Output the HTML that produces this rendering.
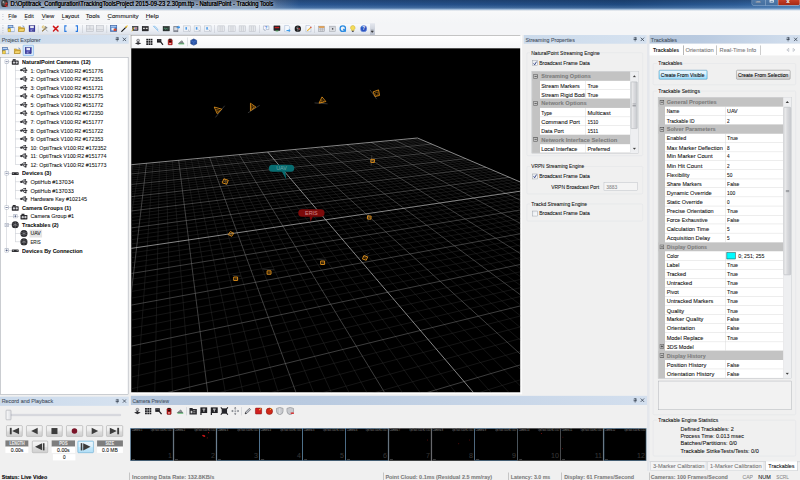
<!DOCTYPE html>
<html><head><meta charset="utf-8"><title>Tracking Tools</title>
<style>
html,body{margin:0;padding:0;width:800px;height:480px;overflow:hidden;background:#f0f0f0}
#root{position:absolute;left:0;top:0;width:1920px;height:1152px;transform:scale(0.416667);transform-origin:0 0;background:#f0f0f0;overflow:hidden;font-family:'Liberation Sans',sans-serif}
#root div,#root span.t,#root svg{position:absolute;box-sizing:border-box}
#root span.t{white-space:nowrap;-webkit-text-stroke:0.2px}

.hdr{background:linear-gradient(#cfdcec,#bccde2);}
.pg{background:#fff;border:1px solid #a0a0a0;}

</style></head><body><div id="root">
<div style="left:0.00px;top:0.00px;width:1920.00px;height:25.20px;background:linear-gradient(90deg,#3a506f 0%,#36527a 30%,#2a5690 37%,#255089 55%,#1f4a80 78%,#2c5c96 92%,#3d72ac 100%)"></div>
<div style="left:0.00px;top:0.00px;width:720.00px;height:25.20px;background:linear-gradient(90deg,rgba(184,198,216,.62) 0,rgba(184,198,216,.58) 82%,rgba(184,198,216,0) 100%)"></div>
<div style="left:0.00px;top:0.00px;width:1920.00px;height:25.20px;background:linear-gradient(180deg,rgba(10,20,40,.25),rgba(255,255,255,0) 45%,rgba(160,195,230,.22) 72%,rgba(170,198,228,.6) 86%,rgba(205,224,243,.95) 95%,#f2f6fb 100%)"></div>
<div style="left:3.36px;top:0.48px;width:15.36px;height:16.80px;background:radial-gradient(circle at 45% 45%,#6a6a6a 0,#2c2c2c 60%,#1a1a1a 100%);border-radius:35%"></div>
<div style="left:5.76px;top:2.88px;width:3.84px;height:3.84px;background:#b8b8b8;border-radius:50%"></div>
<div style="left:12.96px;top:6.24px;width:4.80px;height:4.80px;background:#d82828;border-radius:50%"></div>
<div style="left:10.56px;top:11.04px;width:4.32px;height:4.32px;background:#c82020;border-radius:50%"></div>
<div style="left:14.40px;top:12.96px;width:3.84px;height:3.84px;background:#e03030;border-radius:50%"></div>
<span class="t" style="left:24.96px;top:-0.84px;font:17px/20.40px 'Liberation Sans',sans-serif;color:#080808;transform:scaleX(0.8188);transform-origin:0 50%;text-shadow:0 0 0.7px #000,0 0 7px rgba(255,255,255,.6),0 0 12px rgba(255,255,255,.5),0 0 18px rgba(255,255,255,.4);">D:\Optitrack_Configuration\TrackingToolsProject 2015-09-23 2.30pm.ttp - NaturalPoint - Tracking Tools</span>
<div style="left:1803.60px;top:-9.60px;width:64.80px;height:22.32px;border:1px solid rgba(220,232,245,.6);border-radius:0 0 0 4px;background:linear-gradient(#5882b0,#456f9f)"></div>
<div style="left:1836.00px;top:-9.60px;width:1.01px;height:22.32px;background:rgba(230,240,250,.7)"></div>
<div style="left:1867.20px;top:-9.60px;width:52.80px;height:22.32px;border:1px solid rgba(240,220,215,.8);border-radius:0 0 4px 0;background:linear-gradient(#dc6a52,#c23c24 50%,#a42a16)"></div>
<div style="left:1814.40px;top:2.88px;width:11.04px;height:3.60px;background:#f4f6f8;border:1px solid #4a5a70"></div>
<div style="left:1846.80px;top:-1.44px;width:10.56px;height:7.68px;border:2px solid #f4f6f8;border-top-width:3px"></div>
<span class="t" style="left:1887.12px;top:-8.04px;font:bold 15px/18.00px 'Liberation Sans',sans-serif;color:#fff;text-shadow:0 0 2px #401008;">x</span>
<div style="left:0.00px;top:25.20px;width:1920.00px;height:30.48px;background:linear-gradient(#f8f9fa,#f4f5f7)"></div>
<div style="left:6.00px;top:30.00px;width:2.16px;height:20.40px;background:repeating-linear-gradient(#bcc2cc 0 2px,transparent 2px 4px)"></div>
<span class="t" style="left:20.40px;top:30.12px;font:15px/18.00px 'Liberation Sans',sans-serif;color:#111;transform:scaleX(0.8445);transform-origin:0 50%;">File</span>
<div style="left:20.64px;top:46.32px;width:6.24px;height:1.01px;background:#222"></div>
<span class="t" style="left:58.80px;top:30.12px;font:15px/18.00px 'Liberation Sans',sans-serif;color:#111;transform:scaleX(0.8451);transform-origin:0 50%;">Edit</span>
<div style="left:59.04px;top:46.32px;width:6.24px;height:1.01px;background:#222"></div>
<span class="t" style="left:99.84px;top:30.12px;font:15px/18.00px 'Liberation Sans',sans-serif;color:#111;transform:scaleX(0.9381);transform-origin:0 50%;">View</span>
<div style="left:100.08px;top:46.32px;width:6.24px;height:1.01px;background:#222"></div>
<span class="t" style="left:147.84px;top:30.12px;font:15px/18.00px 'Liberation Sans',sans-serif;color:#111;transform:scaleX(0.9270);transform-origin:0 50%;">Layout</span>
<div style="left:148.08px;top:46.32px;width:6.24px;height:1.01px;background:#222"></div>
<span class="t" style="left:206.40px;top:30.12px;font:15px/18.00px 'Liberation Sans',sans-serif;color:#111;transform:scaleX(0.9596);transform-origin:0 50%;">Tools</span>
<div style="left:206.64px;top:46.32px;width:6.24px;height:1.01px;background:#222"></div>
<span class="t" style="left:257.52px;top:30.12px;font:15px/18.00px 'Liberation Sans',sans-serif;color:#111;transform:scaleX(0.9839);transform-origin:0 50%;">Community</span>
<div style="left:257.76px;top:46.32px;width:6.24px;height:1.01px;background:#222"></div>
<span class="t" style="left:349.92px;top:30.12px;font:15px/18.00px 'Liberation Sans',sans-serif;color:#111;transform:scaleX(0.9960);transform-origin:0 50%;">Help</span>
<div style="left:350.16px;top:46.32px;width:6.24px;height:1.01px;background:#222"></div>
<div style="left:900.48px;top:55.20px;width:1019.52px;height:29.28px;background:#f4f5f7"></div>
<div style="left:0.00px;top:55.68px;width:900.00px;height:28.56px;background:linear-gradient(#fafbfd,#eef1f6 50%,#dde2ea);border-bottom:1px solid #b4bac6;border-radius:0 0 3px 0"></div>
<div style="left:6.00px;top:59.52px;width:2.16px;height:20.40px;background:repeating-linear-gradient(#bcc2cc 0 2px,transparent 2px 4px)"></div>
<svg style="left:17.65px;top:60.37px" width="17.5" height="17.5" viewBox="0 0 16 16"><rect x="1" y="1" width="11" height="10" fill="#5b8fd6" stroke="#2a4f8f"/><rect x="2" y="2" width="9" height="2" fill="#c8dcf5"/><rect x="5" y="6" width="10" height="9" fill="#e8f0fb" stroke="#4a6fa8"/><rect x="1" y="8" width="6" height="7" fill="#f0cf4a" stroke="#a8861a"/></svg>
<svg style="left:42.85px;top:60.37px" width="17.5" height="17.5" viewBox="0 0 16 16"><path d="M1 4h5l1 2h7v8H1z" fill="#e8b93a" stroke="#9a7414"/><path d="M3 8h12l-2 6H1z" fill="#f7d972" stroke="#9a7414"/><path d="M10 2q3 0 4 3" stroke="#2a5fb8" fill="none" stroke-width="1.3"/></svg>
<svg style="left:67.81px;top:60.37px" width="17.5" height="17.5" viewBox="0 0 16 16"><rect x="1.5" y="1.5" width="13" height="13" fill="#3a3aa8" stroke="#1a1a6a"/><rect x="4" y="2" width="8" height="5" fill="#e8e8f5"/><rect x="4.5" y="9.5" width="7" height="5" fill="#8a8ad0"/><rect x="9" y="10.5" width="2" height="3" fill="#22226a"/></svg>
<div style="left:90.72px;top:60.00px;width:1.01px;height:19.20px;background:#b8bcc4"></div>
<svg style="left:99.25px;top:60.37px" width="17.5" height="17.5" viewBox="0 0 16 16"><path d="M2 14L11 5" stroke="#8a6a2a" stroke-width="2.2"/><path d="M9 2l5 4-2 2-4-4z" fill="#7a8088"/><path d="M14 14L6 6" stroke="#9aa0a8" stroke-width="2"/><circle cx="4.5" cy="4.5" r="2.5" fill="none" stroke="#d8b040" stroke-width="1.6"/></svg>
<svg style="left:124.69px;top:60.37px" width="17.5" height="17.5" viewBox="0 0 16 16"><path d="M3 3l10 10M13 3L3 13" stroke="#d01818" stroke-width="3.2" stroke-linecap="round"/></svg>
<svg style="left:148.69px;top:60.37px" width="17.5" height="17.5" viewBox="0 0 16 16"><path d="M10 2H6v12h4" fill="none" stroke="#2a7ae0" stroke-width="2.4"/></svg>
<svg style="left:174.85px;top:60.37px" width="17.5" height="17.5" viewBox="0 0 16 16"><path d="M6 2h4v12H6" fill="none" stroke="#2a7ae0" stroke-width="2.4"/></svg>
<div style="left:198.12px;top:60.00px;width:1.01px;height:19.20px;background:#b8bcc4"></div>
<svg style="left:206.25px;top:59.37px" width="19.5" height="19.5" viewBox="0 0 16 16"><rect x="1" y="2" width="14" height="12" fill="#e4e6ea" stroke="#b4b8c0"/><path d="M8 2v7M1 9h14" stroke="#b4b8c0"/></svg>
<svg style="left:230.25px;top:59.37px" width="19.5" height="19.5" viewBox="0 0 16 16"><rect x="1" y="2" width="14" height="12" fill="#e4e6ea" stroke="#b4b8c0"/><path d="M1 10h14" stroke="#b4b8c0"/></svg>
<div style="left:256.32px;top:60.00px;width:1.01px;height:19.20px;background:#b8bcc4"></div>
<svg style="left:264.25px;top:60.37px" width="17.5" height="17.5" viewBox="0 0 16 16"><rect x="1" y="1" width="14" height="13" fill="#3f76c8" stroke="#24488a"/><rect x="2" y="2" width="12" height="3" fill="#9cc0f0"/><rect x="3" y="6" width="7" height="6" fill="#e8eef8"/><rect x="8" y="8" width="6" height="5" fill="#d84a2a"/></svg>
<svg style="left:289.81px;top:60.37px" width="17.5" height="17.5" viewBox="0 0 16 16"><path d="M2 14L12 4" stroke="#181818" stroke-width="2.6" stroke-linecap="round"/><path d="M11 5l3-3" stroke="#f0c030" stroke-width="2.6" stroke-linecap="round"/></svg>
<svg style="left:315.25px;top:60.37px" width="17.5" height="17.5" viewBox="0 0 16 16"><rect x="3" y="3" width="12" height="9" fill="#3a3a40" stroke="#18181c"/><rect x="6" y="5" width="7" height="5" fill="#b8c4e0"/><path d="M1 14L6 5" stroke="#e8b830" stroke-width="2"/><rect x="9" y="6" width="3" height="2" fill="#d83030"/></svg>
<svg style="left:339.85px;top:60.37px" width="17.5" height="17.5" viewBox="0 0 16 16"><rect x="1" y="3" width="14" height="10" fill="#2a2a2e" stroke="#0c0c10"/><rect x="3" y="6" width="4" height="3" fill="#d8d8d8"/><rect x="9" y="6" width="4" height="3" fill="#d8d8d8"/></svg>
<svg style="left:364.69px;top:60.37px" width="17.5" height="17.5" viewBox="0 0 16 16"><path d="M2 2L14 14M4 2q6 2 9 9" stroke="#6ab0e8" stroke-width="1.4" fill="none"/></svg>
<svg style="left:390.25px;top:60.37px" width="17.5" height="17.5" viewBox="0 0 16 16"><rect x="1" y="3" width="14" height="10" fill="#303a36" stroke="#101614"/><path d="M3 9l2-3 2 4 2-3 2 2 2-2" stroke="#6ad0a0" fill="none"/></svg>
<svg style="left:414.85px;top:60.37px" width="17.5" height="17.5" viewBox="0 0 16 16"><rect x="2" y="3" width="9" height="12" fill="#9a9ea8" stroke="#5a5e68"/><rect x="3" y="5" width="7" height="6" fill="#d8dce4"/><path d="M8 4h4V1l4 4-4 4V6H8z" fill="#2a8ae8"/></svg>
<svg style="left:439.05px;top:59.37px" width="19.5" height="19.5" viewBox="0 0 16 16"><rect x="1.5" y="2.5" width="13" height="11" fill="#eef1f6" stroke="#b8bec8"/><rect x="5" y="5" width="3" height="5" fill="#4a9ae8"/><path d="M10 10l3 3" stroke="#a0a6b0" stroke-width="1.5"/></svg>
<svg style="left:464.25px;top:59.37px" width="19.5" height="19.5" viewBox="0 0 16 16"><rect x="1.5" y="2.5" width="13" height="11" fill="#eef1f6" stroke="#b8bec8"/><rect x="5" y="5" width="3" height="5" fill="#4a9ae8"/><path d="M10 10l3 3" stroke="#a0a6b0" stroke-width="1.5"/></svg>
<svg style="left:489.21px;top:59.37px" width="19.5" height="19.5" viewBox="0 0 16 16"><rect x="1.5" y="2.5" width="13" height="11" fill="#eef1f6" stroke="#b8bec8"/><rect x="5" y="5" width="3" height="5" fill="#4a9ae8"/><path d="M10 10l3 3" stroke="#a0a6b0" stroke-width="1.5"/></svg>
<div style="left:514.08px;top:60.00px;width:1.01px;height:19.20px;background:#b8bcc4"></div>
<svg style="left:521.25px;top:59.37px" width="19.5" height="19.5" viewBox="0 0 16 16"><rect x="1.5" y="2.5" width="13" height="11" fill="#e6e8ec" stroke="#babec6"/><path d="M6 3v10M10 3v10" stroke="#babec6"/></svg>
<svg style="left:546.81px;top:59.37px" width="19.5" height="19.5" viewBox="0 0 16 16"><rect x="1.5" y="2.5" width="13" height="11" fill="#e6e8ec" stroke="#babec6"/><path d="M6 3v10M10 3v10" stroke="#babec6"/></svg>
<svg style="left:571.65px;top:59.37px" width="19.5" height="19.5" viewBox="0 0 16 16"><rect x="1.5" y="2.5" width="13" height="11" fill="#e6e8ec" stroke="#babec6"/><path d="M6 3v10M10 3v10" stroke="#babec6"/></svg>
<svg style="left:596.25px;top:59.37px" width="19.5" height="19.5" viewBox="0 0 16 16"><rect x="1.5" y="2.5" width="13" height="11" fill="#e6e8ec" stroke="#babec6"/><path d="M6 3v10M10 3v10" stroke="#babec6"/></svg>
<div style="left:622.08px;top:60.00px;width:1.01px;height:19.20px;background:#b8bcc4"></div>
<svg style="left:630.25px;top:60.37px" width="17.5" height="17.5" viewBox="0 0 16 16"><path d="M2 2h12v8H8l-3 3v-3H2z" fill="#f4f8ff" stroke="#8a94a8"/><text x="8" y="9" font-size="8" font-weight="bold" text-anchor="middle" fill="#2a6ad8" font-family="Liberation Sans,sans-serif">?</text></svg>
<svg style="left:655.81px;top:60.37px" width="17.5" height="17.5" viewBox="0 0 16 16"><rect x="1" y="2" width="14" height="10" fill="#26262a" stroke="#0a0a0c"/><rect x="3" y="4" width="10" height="3" fill="#c82020"/><rect x="5" y="12" width="6" height="2" fill="#3a9a4a"/></svg>
<svg style="left:680.77px;top:60.37px" width="17.5" height="17.5" viewBox="0 0 16 16"><path d="M2 1h8l3 3v11H2z" fill="#f4f8fd" stroke="#9ab0d0"/><path d="M6 11h5V8l4 4-4 4v-3H6z" fill="#3a9ae8"/></svg>
<svg style="left:706.21px;top:60.37px" width="17.5" height="17.5" viewBox="0 0 16 16"><circle cx="8" cy="8" r="7" fill="#1c1c1e"/><path d="M8 3v10M4 6l8 4" stroke="#d8d8d8" stroke-width="1"/><circle cx="11" cy="8" r="1.5" fill="#d82020"/></svg>
<svg style="left:731.65px;top:60.37px" width="17.5" height="17.5" viewBox="0 0 16 16"><path d="M2 1h8l3 3v11H2z" fill="#f6f8fc" stroke="#9aa8c0"/><path d="M5 13l8-8" stroke="#e8b030" stroke-width="2.4"/><path d="M12 6l2-2" stroke="#d83030" stroke-width="2.4"/></svg>
<div style="left:754.56px;top:60.00px;width:1.01px;height:19.20px;background:#b8bcc4"></div>
<svg style="left:762.85px;top:60.37px" width="17.5" height="17.5" viewBox="0 0 16 16"><rect x="1.5" y="2.5" width="13" height="12" fill="#d8dade" stroke="#8a8e96"/><rect x="2" y="3" width="12" height="3" fill="#e8902a"/><path d="M2 9h12M6 6v8M10 6v8" stroke="#a0a4ac"/></svg>
<svg style="left:789.25px;top:60.37px" width="17.5" height="17.5" viewBox="0 0 16 16"><rect x="1.5" y="2.5" width="13" height="12" fill="#dcdee2" stroke="#9a9ea6"/><rect x="2" y="3" width="12" height="2" fill="#b8bcc4"/><rect x="7" y="7" width="3" height="3" fill="#3a3a40"/></svg>
<svg style="left:813.85px;top:60.37px" width="17.5" height="17.5" viewBox="0 0 16 16"><circle cx="8" cy="8" r="6" fill="none" stroke="#2a8ae0" stroke-width="3"/><path d="M9 9l6 5" stroke="#2a8ae0" stroke-width="3"/></svg>
<svg style="left:838.21px;top:60.37px" width="17.5" height="17.5" viewBox="0 0 16 16"><path d="M8 1a5 5 0 0 1 3 9v2H5v-2a5 5 0 0 1 3-9z" fill="#f4dc5a" stroke="#c8a820"/><rect x="6" y="12.5" width="4" height="3" fill="#5a5a60"/></svg>
<svg style="left:863.65px;top:60.37px" width="17.5" height="17.5" viewBox="0 0 16 16"><circle cx="8" cy="8" r="7" fill="#2a52c0" stroke="#8aa8e8"/><text x="8" y="12" font-size="10" font-weight="bold" text-anchor="middle" fill="#fff" font-family="Liberation Sans,sans-serif">?</text></svg>
<div style="left:888.00px;top:55.68px;width:12.00px;height:28.56px;background:linear-gradient(#e4e7ee,#b9bfcc);border-radius:0 0 3px 0"></div>
<svg style="left:889.44px;top:70.80px;" width="8.64" height="8.64" viewBox="0 0 8.64 8.64"><path d="M1 1h6.6M1.5 4l2.8 3 2.8-3z" stroke="#222" stroke-width="1" fill="#222"/></svg>
<div style="left:0.00px;top:83.76px;width:309.12px;height:21.60px;background:linear-gradient(90deg,#cbdaeb,#d6e2f0)"></div>
<span class="t" style="left:3.84px;top:85.80px;font:15px/18.00px 'Liberation Sans',sans-serif;color:#46505e;transform:scaleX(0.8771);transform-origin:0 50%;">Project Explorer</span>
<svg style="left:275.52px;top:88.32px;" width="10.56" height="12.48" viewBox="0 0 10.56 12.48"><path d="M3 1.4h4.8v5.4H3zM1.4 7h8M5.4 7v4.6" stroke="#2a3646" stroke-width="1.2" fill="none"/><path d="M6.6 1.6v5.2" stroke="#2a3646" stroke-width="1.6"/></svg>
<svg style="left:292.80px;top:89.04px;" width="11.52" height="11.04" viewBox="0 0 11.52 11.04"><path d="M1.6 1.4l8.2 8.2M9.8 1.4L1.6 9.6" stroke="#2a3646" stroke-width="1.7"/></svg>
<svg style="left:5.17px;top:112.93px" width="17.5" height="17.5" viewBox="0 0 16 16"><rect x="1" y="1" width="11" height="10" fill="#5b8fd6" stroke="#2a4f8f"/><rect x="2" y="2" width="9" height="2" fill="#c8dcf5"/><rect x="5" y="6" width="10" height="9" fill="#e8f0fb" stroke="#4a6fa8"/><rect x="1" y="8" width="6" height="7" fill="#f0cf4a" stroke="#a8861a"/></svg>
<svg style="left:33.01px;top:112.93px" width="17.5" height="17.5" viewBox="0 0 16 16"><path d="M1 4h5l1 2h7v8H1z" fill="#e8b93a" stroke="#9a7414"/><path d="M3 8h12l-2 6H1z" fill="#f7d972" stroke="#9a7414"/><path d="M10 2q3 0 4 3" stroke="#2a5fb8" fill="none" stroke-width="1.3"/></svg>
<div style="left:55.20px;top:108.48px;width:25.44px;height:25.44px;background:#d6e8fb;border:1px solid #4a9ae8;border-radius:2px"></div>
<svg style="left:59.41px;top:112.93px" width="17.5" height="17.5" viewBox="0 0 16 16"><rect x="1.5" y="1.5" width="13" height="13" fill="#3a3aa8" stroke="#1a1a6a"/><rect x="4" y="2" width="8" height="5" fill="#e8e8f5"/><rect x="4.5" y="9.5" width="7" height="5" fill="#8a8ad0"/><rect x="9" y="10.5" width="2" height="3" fill="#22226a"/></svg>
<div style="left:0.96px;top:136.80px;width:306.72px;height:809.76px;background:#fff;border:1px solid #8a919c"></div>
<div style="left:15.12px;top:153.00px;width:1.01px;height:443.69px;background:#b4b9c2"></div>
<div style="left:36.48px;top:156.60px;width:1.01px;height:238.85px;background:#b4b9c2"></div>
<div style="left:36.48px;top:424.45px;width:1.01px;height:53.41px;background:#b4b9c2"></div>
<div style="left:36.48px;top:548.08px;width:1.01px;height:32.81px;background:#b4b9c2"></div>
<div style="left:20.40px;top:147.72px;width:7.20px;height:1.01px;background:#b4b9c2"></div>
<svg style="left:10.56px;top:143.16px" width="10" height="10" viewBox="0 0 9 9"><rect x="0.5" y="0.5" width="8" height="8" fill="#fff" stroke="#6a7890" stroke-width="1.1"/><path d="M2.2 4.5h4.6" stroke="#1a2a5a" stroke-width="1.2"/></svg>
<svg style="left:27.22px;top:138.70px" width="19" height="19" viewBox="0 0 16 16"><rect x="1" y="5" width="14" height="9" rx="1" fill="#2e2e32"/><rect x="3" y="2.5" width="6" height="3" fill="#2e2e32"/><circle cx="5.5" cy="9.5" r="2.3" fill="#d0d0d4"/><circle cx="11" cy="9.5" r="2.3" fill="#d0d0d4"/></svg>
<span class="t" style="left:52.56px;top:139.20px;font:bold 15px/18.00px 'Liberation Sans',sans-serif;color:#101010;transform:scaleX(0.8776);transform-origin:0 50%;">NaturalPoint Cameras (12)</span>
<div style="left:37.44px;top:168.32px;width:10.56px;height:1.01px;background:#b4b9c2"></div>
<svg style="left:48.10px;top:159.30px" width="19" height="19" viewBox="0 0 16 16"><path d="M1 8h12" stroke="#333338" stroke-width="2"/><path d="M11 5.2L15.8 8 11 10.8z" fill="#333338"/><path d="M3.6 8l2.8-3.8H10M5.6 8l2.8 3.8H11" stroke="#333338" stroke-width="1.7" fill="none"/><circle cx="2.6" cy="8" r="2.2" fill="#333338"/><rect x="9.2" y="2.6" width="3" height="3" fill="#333338"/><circle cx="11.6" cy="11.8" r="1.7" fill="#333338"/></svg>
<span class="t" style="left:72.96px;top:159.80px;font:15px/18.00px 'Liberation Sans',sans-serif;color:#141414;transform:scaleX(0.8482);transform-origin:0 50%;">1: OptiTrack V100:R2 #151776</span>
<div style="left:37.44px;top:188.93px;width:10.56px;height:1.01px;background:#b4b9c2"></div>
<svg style="left:48.10px;top:179.91px" width="19" height="19" viewBox="0 0 16 16"><path d="M1 8h12" stroke="#333338" stroke-width="2"/><path d="M11 5.2L15.8 8 11 10.8z" fill="#333338"/><path d="M3.6 8l2.8-3.8H10M5.6 8l2.8 3.8H11" stroke="#333338" stroke-width="1.7" fill="none"/><circle cx="2.6" cy="8" r="2.2" fill="#333338"/><rect x="9.2" y="2.6" width="3" height="3" fill="#333338"/><circle cx="11.6" cy="11.8" r="1.7" fill="#333338"/></svg>
<span class="t" style="left:72.96px;top:180.41px;font:15px/18.00px 'Liberation Sans',sans-serif;color:#141414;transform:scaleX(0.8482);transform-origin:0 50%;">2: OptiTrack V100:R2 #172351</span>
<div style="left:37.44px;top:209.53px;width:10.56px;height:1.01px;background:#b4b9c2"></div>
<svg style="left:48.10px;top:200.51px" width="19" height="19" viewBox="0 0 16 16"><path d="M1 8h12" stroke="#333338" stroke-width="2"/><path d="M11 5.2L15.8 8 11 10.8z" fill="#333338"/><path d="M3.6 8l2.8-3.8H10M5.6 8l2.8 3.8H11" stroke="#333338" stroke-width="1.7" fill="none"/><circle cx="2.6" cy="8" r="2.2" fill="#333338"/><rect x="9.2" y="2.6" width="3" height="3" fill="#333338"/><circle cx="11.6" cy="11.8" r="1.7" fill="#333338"/></svg>
<span class="t" style="left:72.96px;top:201.01px;font:15px/18.00px 'Liberation Sans',sans-serif;color:#141414;transform:scaleX(0.8482);transform-origin:0 50%;">3: OptiTrack V100:R2 #151721</span>
<div style="left:37.44px;top:230.14px;width:10.56px;height:1.01px;background:#b4b9c2"></div>
<svg style="left:48.10px;top:221.12px" width="19" height="19" viewBox="0 0 16 16"><path d="M1 8h12" stroke="#333338" stroke-width="2"/><path d="M11 5.2L15.8 8 11 10.8z" fill="#333338"/><path d="M3.6 8l2.8-3.8H10M5.6 8l2.8 3.8H11" stroke="#333338" stroke-width="1.7" fill="none"/><circle cx="2.6" cy="8" r="2.2" fill="#333338"/><rect x="9.2" y="2.6" width="3" height="3" fill="#333338"/><circle cx="11.6" cy="11.8" r="1.7" fill="#333338"/></svg>
<span class="t" style="left:72.96px;top:221.62px;font:15px/18.00px 'Liberation Sans',sans-serif;color:#141414;transform:scaleX(0.8482);transform-origin:0 50%;">4: OptiTrack V100:R2 #151775</span>
<div style="left:37.44px;top:250.74px;width:10.56px;height:1.01px;background:#b4b9c2"></div>
<svg style="left:48.10px;top:241.72px" width="19" height="19" viewBox="0 0 16 16"><path d="M1 8h12" stroke="#333338" stroke-width="2"/><path d="M11 5.2L15.8 8 11 10.8z" fill="#333338"/><path d="M3.6 8l2.8-3.8H10M5.6 8l2.8 3.8H11" stroke="#333338" stroke-width="1.7" fill="none"/><circle cx="2.6" cy="8" r="2.2" fill="#333338"/><rect x="9.2" y="2.6" width="3" height="3" fill="#333338"/><circle cx="11.6" cy="11.8" r="1.7" fill="#333338"/></svg>
<span class="t" style="left:72.96px;top:242.22px;font:15px/18.00px 'Liberation Sans',sans-serif;color:#141414;transform:scaleX(0.8482);transform-origin:0 50%;">5: OptiTrack V100:R2 #151772</span>
<div style="left:37.44px;top:271.34px;width:10.56px;height:1.01px;background:#b4b9c2"></div>
<svg style="left:48.10px;top:262.32px" width="19" height="19" viewBox="0 0 16 16"><path d="M1 8h12" stroke="#333338" stroke-width="2"/><path d="M11 5.2L15.8 8 11 10.8z" fill="#333338"/><path d="M3.6 8l2.8-3.8H10M5.6 8l2.8 3.8H11" stroke="#333338" stroke-width="1.7" fill="none"/><circle cx="2.6" cy="8" r="2.2" fill="#333338"/><rect x="9.2" y="2.6" width="3" height="3" fill="#333338"/><circle cx="11.6" cy="11.8" r="1.7" fill="#333338"/></svg>
<span class="t" style="left:72.96px;top:262.82px;font:15px/18.00px 'Liberation Sans',sans-serif;color:#141414;transform:scaleX(0.8482);transform-origin:0 50%;">6: OptiTrack V100:R2 #172350</span>
<div style="left:37.44px;top:291.95px;width:10.56px;height:1.01px;background:#b4b9c2"></div>
<svg style="left:48.10px;top:282.93px" width="19" height="19" viewBox="0 0 16 16"><path d="M1 8h12" stroke="#333338" stroke-width="2"/><path d="M11 5.2L15.8 8 11 10.8z" fill="#333338"/><path d="M3.6 8l2.8-3.8H10M5.6 8l2.8 3.8H11" stroke="#333338" stroke-width="1.7" fill="none"/><circle cx="2.6" cy="8" r="2.2" fill="#333338"/><rect x="9.2" y="2.6" width="3" height="3" fill="#333338"/><circle cx="11.6" cy="11.8" r="1.7" fill="#333338"/></svg>
<span class="t" style="left:72.96px;top:283.43px;font:15px/18.00px 'Liberation Sans',sans-serif;color:#141414;transform:scaleX(0.8482);transform-origin:0 50%;">7: OptiTrack V100:R2 #151777</span>
<div style="left:37.44px;top:312.55px;width:10.56px;height:1.01px;background:#b4b9c2"></div>
<svg style="left:48.10px;top:303.53px" width="19" height="19" viewBox="0 0 16 16"><path d="M1 8h12" stroke="#333338" stroke-width="2"/><path d="M11 5.2L15.8 8 11 10.8z" fill="#333338"/><path d="M3.6 8l2.8-3.8H10M5.6 8l2.8 3.8H11" stroke="#333338" stroke-width="1.7" fill="none"/><circle cx="2.6" cy="8" r="2.2" fill="#333338"/><rect x="9.2" y="2.6" width="3" height="3" fill="#333338"/><circle cx="11.6" cy="11.8" r="1.7" fill="#333338"/></svg>
<span class="t" style="left:72.96px;top:304.03px;font:15px/18.00px 'Liberation Sans',sans-serif;color:#141414;transform:scaleX(0.8482);transform-origin:0 50%;">8: OptiTrack V100:R2 #151722</span>
<div style="left:37.44px;top:333.16px;width:10.56px;height:1.01px;background:#b4b9c2"></div>
<svg style="left:48.10px;top:324.14px" width="19" height="19" viewBox="0 0 16 16"><path d="M1 8h12" stroke="#333338" stroke-width="2"/><path d="M11 5.2L15.8 8 11 10.8z" fill="#333338"/><path d="M3.6 8l2.8-3.8H10M5.6 8l2.8 3.8H11" stroke="#333338" stroke-width="1.7" fill="none"/><circle cx="2.6" cy="8" r="2.2" fill="#333338"/><rect x="9.2" y="2.6" width="3" height="3" fill="#333338"/><circle cx="11.6" cy="11.8" r="1.7" fill="#333338"/></svg>
<span class="t" style="left:72.96px;top:324.64px;font:15px/18.00px 'Liberation Sans',sans-serif;color:#141414;transform:scaleX(0.8482);transform-origin:0 50%;">9: OptiTrack V100:R2 #172353</span>
<div style="left:37.44px;top:353.76px;width:10.56px;height:1.01px;background:#b4b9c2"></div>
<svg style="left:48.10px;top:344.74px" width="19" height="19" viewBox="0 0 16 16"><path d="M1 8h12" stroke="#333338" stroke-width="2"/><path d="M11 5.2L15.8 8 11 10.8z" fill="#333338"/><path d="M3.6 8l2.8-3.8H10M5.6 8l2.8 3.8H11" stroke="#333338" stroke-width="1.7" fill="none"/><circle cx="2.6" cy="8" r="2.2" fill="#333338"/><rect x="9.2" y="2.6" width="3" height="3" fill="#333338"/><circle cx="11.6" cy="11.8" r="1.7" fill="#333338"/></svg>
<span class="t" style="left:72.96px;top:345.24px;font:15px/18.00px 'Liberation Sans',sans-serif;color:#141414;transform:scaleX(0.8499);transform-origin:0 50%;">10: OptiTrack V100:R2 #172352</span>
<div style="left:37.44px;top:374.36px;width:10.56px;height:1.01px;background:#b4b9c2"></div>
<svg style="left:48.10px;top:365.34px" width="19" height="19" viewBox="0 0 16 16"><path d="M1 8h12" stroke="#333338" stroke-width="2"/><path d="M11 5.2L15.8 8 11 10.8z" fill="#333338"/><path d="M3.6 8l2.8-3.8H10M5.6 8l2.8 3.8H11" stroke="#333338" stroke-width="1.7" fill="none"/><circle cx="2.6" cy="8" r="2.2" fill="#333338"/><rect x="9.2" y="2.6" width="3" height="3" fill="#333338"/><circle cx="11.6" cy="11.8" r="1.7" fill="#333338"/></svg>
<span class="t" style="left:72.96px;top:365.84px;font:15px/18.00px 'Liberation Sans',sans-serif;color:#141414;transform:scaleX(0.8543);transform-origin:0 50%;">11: OptiTrack V100:R2 #151774</span>
<div style="left:37.44px;top:394.97px;width:10.56px;height:1.01px;background:#b4b9c2"></div>
<svg style="left:48.10px;top:385.95px" width="19" height="19" viewBox="0 0 16 16"><path d="M1 8h12" stroke="#333338" stroke-width="2"/><path d="M11 5.2L15.8 8 11 10.8z" fill="#333338"/><path d="M3.6 8l2.8-3.8H10M5.6 8l2.8 3.8H11" stroke="#333338" stroke-width="1.7" fill="none"/><circle cx="2.6" cy="8" r="2.2" fill="#333338"/><rect x="9.2" y="2.6" width="3" height="3" fill="#333338"/><circle cx="11.6" cy="11.8" r="1.7" fill="#333338"/></svg>
<span class="t" style="left:72.96px;top:386.45px;font:15px/18.00px 'Liberation Sans',sans-serif;color:#141414;transform:scaleX(0.8499);transform-origin:0 50%;">12: OptiTrack V100:R2 #151773</span>
<div style="left:20.40px;top:415.57px;width:7.20px;height:1.01px;background:#b4b9c2"></div>
<svg style="left:10.56px;top:411.01px" width="10" height="10" viewBox="0 0 9 9"><rect x="0.5" y="0.5" width="8" height="8" fill="#fff" stroke="#6a7890" stroke-width="1.1"/><path d="M2.2 4.5h4.6" stroke="#1a2a5a" stroke-width="1.2"/></svg>
<svg style="left:27.22px;top:406.55px" width="19" height="19" viewBox="0 0 16 16"><rect x="1" y="5.5" width="14" height="5.5" rx="1.2" fill="#2e2e32"/><rect x="3" y="7" width="2" height="2" fill="#b0b0b4"/><rect x="11" y="7" width="2" height="2" fill="#b0b0b4"/></svg>
<span class="t" style="left:52.56px;top:407.05px;font:bold 15px/18.00px 'Liberation Sans',sans-serif;color:#101010;transform:scaleX(0.8845);transform-origin:0 50%;">Devices (3)</span>
<div style="left:37.44px;top:436.18px;width:10.56px;height:1.01px;background:#b4b9c2"></div>
<svg style="left:48.10px;top:427.16px" width="19" height="19" viewBox="0 0 16 16"><path d="M1 8h12" stroke="#333338" stroke-width="2"/><path d="M11 5.2L15.8 8 11 10.8z" fill="#333338"/><path d="M3.6 8l2.8-3.8H10M5.6 8l2.8 3.8H11" stroke="#333338" stroke-width="1.7" fill="none"/><circle cx="2.6" cy="8" r="2.2" fill="#333338"/><rect x="9.2" y="2.6" width="3" height="3" fill="#333338"/><circle cx="11.6" cy="11.8" r="1.7" fill="#333338"/></svg>
<span class="t" style="left:72.96px;top:427.66px;font:15px/18.00px 'Liberation Sans',sans-serif;color:#141414;transform:scaleX(0.8856);transform-origin:0 50%;">OptiHub #137034</span>
<div style="left:37.44px;top:456.78px;width:10.56px;height:1.01px;background:#b4b9c2"></div>
<svg style="left:48.10px;top:447.76px" width="19" height="19" viewBox="0 0 16 16"><path d="M1 8h12" stroke="#333338" stroke-width="2"/><path d="M11 5.2L15.8 8 11 10.8z" fill="#333338"/><path d="M3.6 8l2.8-3.8H10M5.6 8l2.8 3.8H11" stroke="#333338" stroke-width="1.7" fill="none"/><circle cx="2.6" cy="8" r="2.2" fill="#333338"/><rect x="9.2" y="2.6" width="3" height="3" fill="#333338"/><circle cx="11.6" cy="11.8" r="1.7" fill="#333338"/></svg>
<span class="t" style="left:72.96px;top:448.26px;font:15px/18.00px 'Liberation Sans',sans-serif;color:#141414;transform:scaleX(0.8856);transform-origin:0 50%;">OptiHub #137033</span>
<div style="left:37.44px;top:477.38px;width:10.56px;height:1.01px;background:#b4b9c2"></div>
<svg style="left:48.10px;top:468.36px" width="19" height="19" viewBox="0 0 16 16"><path d="M1 8h12" stroke="#333338" stroke-width="2"/><path d="M11 5.2L15.8 8 11 10.8z" fill="#333338"/><path d="M3.6 8l2.8-3.8H10M5.6 8l2.8 3.8H11" stroke="#333338" stroke-width="1.7" fill="none"/><circle cx="2.6" cy="8" r="2.2" fill="#333338"/><rect x="9.2" y="2.6" width="3" height="3" fill="#333338"/><circle cx="11.6" cy="11.8" r="1.7" fill="#333338"/></svg>
<span class="t" style="left:72.96px;top:468.86px;font:15px/18.00px 'Liberation Sans',sans-serif;color:#141414;transform:scaleX(0.8603);transform-origin:0 50%;">Hardware Key #102145</span>
<div style="left:20.40px;top:497.99px;width:7.20px;height:1.01px;background:#b4b9c2"></div>
<svg style="left:10.56px;top:493.43px" width="10" height="10" viewBox="0 0 9 9"><rect x="0.5" y="0.5" width="8" height="8" fill="#fff" stroke="#6a7890" stroke-width="1.1"/><path d="M2.2 4.5h4.6" stroke="#1a2a5a" stroke-width="1.2"/></svg>
<svg style="left:27.22px;top:488.97px" width="19" height="19" viewBox="0 0 16 16"><rect x="1" y="5" width="14" height="9" rx="1" fill="#2e2e32"/><rect x="3" y="2.5" width="6" height="3" fill="#2e2e32"/><circle cx="5.5" cy="9.5" r="2.3" fill="#d0d0d4"/><circle cx="11" cy="9.5" r="2.3" fill="#d0d0d4"/></svg>
<span class="t" style="left:52.56px;top:489.47px;font:bold 15px/18.00px 'Liberation Sans',sans-serif;color:#101010;transform:scaleX(0.8707);transform-origin:0 50%;">Camera Groups (1)</span>
<div style="left:20.40px;top:518.59px;width:25.20px;height:1.01px;background:#b4b9c2"></div>
<svg style="left:31.92px;top:514.03px" width="10" height="10" viewBox="0 0 9 9"><rect x="0.5" y="0.5" width="8" height="8" fill="#fff" stroke="#6a7890" stroke-width="1.1"/><path d="M2.2 4.5h4.6" stroke="#1a2a5a" stroke-width="1.2"/><path d="M4.5 2.2v4.6" stroke="#1a2a5a" stroke-width="1.2"/></svg>
<svg style="left:48.10px;top:509.57px" width="19" height="19" viewBox="0 0 16 16"><rect x="1" y="5" width="14" height="9" rx="1" fill="#2e2e32"/><rect x="3" y="2.5" width="6" height="3" fill="#2e2e32"/><circle cx="5.5" cy="9.5" r="2.3" fill="#d0d0d4"/><circle cx="11" cy="9.5" r="2.3" fill="#d0d0d4"/></svg>
<span class="t" style="left:72.96px;top:510.07px;font:15px/18.00px 'Liberation Sans',sans-serif;color:#141414;transform:scaleX(0.8713);transform-origin:0 50%;">Camera Group #1</span>
<div style="left:20.40px;top:539.20px;width:7.20px;height:1.01px;background:#b4b9c2"></div>
<svg style="left:10.56px;top:534.64px" width="10" height="10" viewBox="0 0 9 9"><rect x="0.5" y="0.5" width="8" height="8" fill="#fff" stroke="#6a7890" stroke-width="1.1"/><path d="M2.2 4.5h4.6" stroke="#1a2a5a" stroke-width="1.2"/></svg>
<svg style="left:27.22px;top:530.18px" width="19" height="19" viewBox="0 0 16 16"><circle cx="8" cy="8" r="7.2" fill="#28282c"/><path d="M8 2v12M2.5 5.5l11 5M13.5 5.5l-11 5" stroke="#a8a8ac" stroke-width="0.9"/></svg>
<span class="t" style="left:52.56px;top:530.68px;font:bold 15px/18.00px 'Liberation Sans',sans-serif;color:#101010;transform:scaleX(0.8777);transform-origin:0 50%;">Trackables (2)</span>
<div style="left:37.44px;top:559.80px;width:10.56px;height:1.01px;background:#b4b9c2"></div>
<svg style="left:48.10px;top:550.78px" width="19" height="19" viewBox="0 0 16 16"><circle cx="8" cy="8" r="7.2" fill="#28282c"/><path d="M8 2v12M2.5 5.5l11 5M13.5 5.5l-11 5" stroke="#a8a8ac" stroke-width="0.9"/></svg>
<div style="left:70.56px;top:550.68px;width:30.24px;height:19.20px;background:#e4e4e4"></div>
<span class="t" style="left:72.96px;top:551.28px;font:15px/18.00px 'Liberation Sans',sans-serif;color:#141414;transform:scaleX(0.8318);transform-origin:0 50%;">UAV</span>
<div style="left:37.44px;top:580.40px;width:10.56px;height:1.01px;background:#b4b9c2"></div>
<svg style="left:48.10px;top:571.38px" width="19" height="19" viewBox="0 0 16 16"><circle cx="8" cy="8" r="7.2" fill="#28282c"/><path d="M8 2v12M2.5 5.5l11 5M13.5 5.5l-11 5" stroke="#a8a8ac" stroke-width="0.9"/></svg>
<span class="t" style="left:72.96px;top:571.88px;font:15px/18.00px 'Liberation Sans',sans-serif;color:#141414;transform:scaleX(0.7063);transform-origin:0 50%;">ERIS</span>
<div style="left:20.40px;top:601.01px;width:7.20px;height:1.01px;background:#b4b9c2"></div>
<svg style="left:10.56px;top:596.45px" width="10" height="10" viewBox="0 0 9 9"><rect x="0.5" y="0.5" width="8" height="8" fill="#fff" stroke="#6a7890" stroke-width="1.1"/><path d="M2.2 4.5h4.6" stroke="#1a2a5a" stroke-width="1.2"/><path d="M4.5 2.2v4.6" stroke="#1a2a5a" stroke-width="1.2"/></svg>
<svg style="left:27.22px;top:591.99px" width="19" height="19" viewBox="0 0 16 16"><rect x="1" y="5.5" width="14" height="5.5" rx="1.2" fill="#2e2e32"/><rect x="3" y="7" width="2" height="2" fill="#b0b0b4"/><rect x="11" y="7" width="2" height="2" fill="#b0b0b4"/></svg>
<span class="t" style="left:52.56px;top:592.49px;font:bold 15px/18.00px 'Liberation Sans',sans-serif;color:#101010;transform:scaleX(0.8710);transform-origin:0 50%;">Devices By Connection</span>
<div style="left:313.68px;top:84.48px;width:935.52px;height:31.92px;background:linear-gradient(#ffffff,#f4f5f7);border-top:1.4px solid #7c7c7c;border-left:1.4px solid #707070"></div>
<svg style="left:322.70px;top:92.06px" width="17" height="17" viewBox="0 0 16 16"><circle cx="8" cy="5" r="3.2" fill="#c8c8cc" stroke="#4a4a50" stroke-width="1.2"/><rect x="6.6" y="7" width="2.8" height="3" fill="#3a3a3e"/><path d="M0.8 11.2L8 8.6l7.2 2.6L8 14.6z" fill="#2e2e32"/></svg>
<svg style="left:349.82px;top:92.06px" width="17" height="17" viewBox="0 0 16 16"><path d="M1 1h4v4H1zM6 1h4v4H6zM11 1h4v4h-4zM1 6h4v4H1zM6 6h4v4H6zM11 6h4v4h-4zM1 11h4v4H1zM6 11h4v4H6zM11 11h4v4h-4z" fill="#1e1e22"/></svg>
<svg style="left:375.50px;top:92.06px" width="17" height="17" viewBox="0 0 16 16"><rect x="0.6" y="1.6" width="10" height="8" fill="#1e1e22"/><rect x="2" y="3" width="7.2" height="2" fill="#55555a"/><path d="M9.4 8.6l5 6" stroke="#1e1e22" stroke-width="2.8"/></svg>
<svg style="left:400.22px;top:92.06px" width="17" height="17" viewBox="0 0 16 16"><rect x="3.4" y="2.4" width="9.2" height="12.8" rx="1.6" fill="#c41616" stroke="#5a0c0c" stroke-width="1"/><rect x="5" y="0.6" width="6" height="3" fill="#3a1414"/><rect x="5.2" y="5" width="5.6" height="3.6" fill="#2c0c0c"/><rect x="5.6" y="10.6" width="4.8" height="2.6" fill="#f0b0b0"/></svg>
<svg style="left:425.90px;top:92.06px" width="17" height="17" viewBox="0 0 16 16"><path d="M0.6 12L10 4.4l5.4 7.6z" fill="#6e7276"/><path d="M4 9.6l5.4-4 3.4 4z" fill="#8e9296"/><path d="M2.6 12.6h13" stroke="#30a844" stroke-width="1.7"/></svg>
<div style="left:449.52px;top:90.00px;width:1.01px;height:20.88px;background:#b8bcc4"></div>
<svg style="left:456.12px;top:91.56px" width="18" height="18" viewBox="0 0 16 16"><path d="M8 1l6.5 3.5v7L8 15l-6.5-3.5v-7z" fill="#2a55a8" stroke="#16306a"/><path d="M8 8v7M8 8L1.5 4.5M8 8l6.5-3.5" stroke="#5a88d8" stroke-width="1"/></svg>
<svg style="left:314.88px;top:116.16px;background:#000" width="933.84" height="826.08" viewBox="0 0 933.84 826.08"><path d="M-4838.8 3823.8L-385.6 315.2M1112.3 3787.9L2898.6 1161.9M-4652.8 3822.7L-366.1 313.4M552.7 3791.3L2767.2 1105.7M-4466.9 3821.5L-346.8 311.6M-6.9 3794.7L2647.6 1054.5M-4280.9 3820.4L-327.6 309.8M-566.4 3798.0L2538.1 1007.6M-3909.0 3818.2L-289.9 306.3M-1685.6 3804.8L2344.8 924.9M-3723.0 3817.1L-271.3 304.6M-2245.2 3808.1L2259.2 888.2M-3537.0 3815.9L-252.9 302.8M-2804.7 3811.5L2179.7 854.2M-3351.1 3814.8L-234.6 301.1M-3364.3 3814.9L2105.8 822.6M-2979.1 3812.6L-198.6 297.8M-4483.5 3821.6L1972.6 765.5M-2793.2 3811.5L-180.8 296.1M-4999.5 3805.7L1912.4 739.8M-2607.2 3810.3L-163.2 294.5M-4329.8 3297.2L1855.8 715.5M-2421.2 3809.2L-145.7 292.8M-3816.3 2907.2L1802.6 692.8M-2049.3 3807.0L-111.3 289.6M-3080.6 2348.6L1705.3 651.1M-1863.3 3805.8L-94.3 288.0M-2808.0 2141.6L1660.6 632.0M-1677.4 3804.7L-77.4 286.5M-2578.9 1967.6L1618.3 613.9M-1491.4 3803.6L-60.7 284.9M-2383.4 1819.2L1578.2 596.7M-1119.5 3801.4L-27.7 281.8M-2067.9 1579.6L1503.9 564.9M-933.5 3800.2L-11.5 280.3M-1938.6 1481.4L1469.5 550.2M-747.5 3799.1L4.6 278.8M-1824.1 1394.5L1436.6 536.1M-561.6 3798.0L20.6 277.3M-1721.9 1316.9L1405.3 522.7M-189.6 3795.8L52.2 274.4M-1547.3 1184.3L1346.8 497.6M-3.7 3794.6L67.8 272.9M-1472.2 1127.2L1319.5 485.9M182.3 3793.5L83.3 271.5M-1403.7 1075.2L1293.2 474.7M368.3 3792.4L98.6 270.1M-1341.0 1027.6L1268.1 464.0M740.2 3790.1L128.8 267.2M-1230.3 943.6L1220.8 443.7M926.2 3789.0L143.8 265.8M-1181.2 906.3L1198.6 434.2M1112.1 3787.9L158.6 264.5M-1135.7 871.7L1177.2 425.0M1298.1 3786.8L173.3 263.1M-1093.4 839.5L1156.5 416.2M1670.0 3784.5L202.4 260.4M-1017.0 781.6L1117.5 399.5M1770.7 3600.0L216.7 259.0M-982.4 755.3L1099.1 391.6M1861.3 3430.8L230.9 257.7M-950.0 730.7L1081.3 384.0M1944.0 3276.5L245.0 256.4M-919.5 707.5L1064.0 376.6M2089.2 3005.4L272.9 253.8M-863.6 665.1L1031.3 362.6M2153.4 2885.6L286.7 252.5M-838.0 645.6L1015.8 355.9M2212.7 2774.9L300.4 251.2M-813.7 627.2L1000.7 349.5M2267.7 2672.1L313.9 250.0M-790.7 609.7L986.1 343.2M2366.6 2487.4L340.7 247.5M-748.0 577.3L958.3 331.3M2411.3 2404.1L354.0 246.2M-728.3 562.3L945.0 325.6M2453.1 2326.0L367.1 245.0M-709.4 548.0L932.1 320.1M2492.4 2252.7L380.2 243.8M-691.4 534.3L919.6 314.7M2564.1 2118.8L405.9 241.4M-657.8 508.8L895.6 304.5M2596.9 2057.5L418.7 240.2M-642.1 496.9L884.1 299.6M2628.0 1999.5L431.3 239.0M-627.0 485.5L872.9 294.8M2657.4 1944.6L443.9 237.9M-612.6 474.5L862.1 290.1M2711.8 1843.1L468.7 235.5M-585.4 453.9L841.2 281.2M2736.9 1796.1L481.0 234.4M-572.7 444.2L831.2 276.9M2760.9 1751.4L493.1 233.3M-560.3 434.8L821.4 272.7M2783.8 1708.7L505.2 232.1M-548.5 425.8L811.9 268.6M2826.4 1629.1L529.1 229.9M-526.1 408.8L793.6 260.8M2846.3 1591.9L540.9 228.8M-515.5 400.7L784.7 257.0M2865.4 1556.4L552.7 227.7M-505.2 393.0L776.1 253.3M2883.6 1522.3L564.3 226.6M-495.3 385.4L767.7 249.7M2917.9 1458.2L587.3 224.5M-476.5 371.2L751.5 242.8M2934.1 1428.1L598.7 223.4M-467.6 364.4L743.7 239.4M2949.6 1399.1L610.1 222.4M-458.9 357.8L736.0 236.2M2964.5 1371.2L621.3 221.3M-450.5 351.4L728.5 233.0M2992.7 1318.5L643.5 219.2M-434.5 339.3L714.1 226.8M3006.1 1293.6L654.5 218.2M-426.9 333.5L707.1 223.8M3019.0 1269.6L665.4 217.2M-419.5 327.8L700.3 220.9M3031.4 1246.4L676.2 216.2M-412.3 322.4L693.6 218.0" stroke="#323232" stroke-width="1" fill="none"/><path d="M-5024.8 3824.9L-405.3 317.1M1671.9 3784.5L3043.4 1223.9M-4094.9 3819.3L-308.7 308.0M-1126.0 3801.4L2437.5 964.6M-3165.1 3813.7L-216.5 299.4M-3923.9 3818.3L2037.0 793.1M-2235.3 3808.1L-128.4 291.2M-3410.0 2598.7L1752.5 671.3M-1305.4 3802.5L-44.2 283.4M-2214.8 1691.1L1540.1 580.4M-375.6 3796.9L36.5 275.9M-1630.2 1247.2L1375.4 509.9M554.2 3791.3L113.8 268.6M-1283.4 983.9L1244.0 453.6M1484.1 3785.7L187.9 261.7M-1053.9 809.6L1136.7 407.7M2019.7 3135.2L259.0 255.1M-890.7 685.7L1047.4 369.5M2529.3 2183.8L393.1 242.6M-674.2 521.3L907.4 309.5M2685.3 1892.6L456.3 236.7M-598.8 464.0L851.5 285.6M2805.6 1668.0L517.2 231.0M-537.1 417.1L802.6 264.7M2901.1 1489.6L575.9 225.5M-485.8 378.2L759.5 246.2M2978.9 1344.4L632.4 220.3M-442.4 345.3L721.2 229.8" stroke="#767676" stroke-width="1.25" fill="none"/><path d="M2318.9 2576.6L327.4 248.7M-768.8 593.1L972.0 337.2M3043.4 1223.9L687.0 215.2M-405.3 317.1L687.0 215.2" stroke="#bcbcbc" stroke-width="1.7" fill="none"/><path d="M202.1 165.8L224.2 137.8" stroke="#5a5a5a" stroke-width="1.4"/><path d="M199.2 140.9L217.2 145.9L206.2 156.8Z" stroke="#e8951a" stroke-width="2" fill="none" stroke-linejoin="round"/><path d="M204.7 146.4L212.2 148.6L207.4 153.1Z" stroke="#e8951a" stroke-width="1.2" fill="none" stroke-linejoin="round"/><path d="M280.1 154.8L308.2 136.8" stroke="#5a5a5a" stroke-width="1.4"/><path d="M286.1 131.8L299.0 140.9L286.1 149.8Z" stroke="#e8951a" stroke-width="2" fill="none" stroke-linejoin="round"/><path d="M289.0 137.3L294.7 141.1L289.0 145.4Z" stroke="#e8951a" stroke-width="1.2" fill="none" stroke-linejoin="round"/><path d="M439.9 131.0L471.1 133.2" stroke="#5a5a5a" stroke-width="1.4"/><path d="M457.9 116.6L467.0 127.7L450.7 131.5Z" stroke="#e8951a" stroke-width="2" fill="none" stroke-linejoin="round"/><path d="M457.9 122.9L462.7 128.2L454.6 129.8Z" stroke="#e8951a" stroke-width="1.2" fill="none" stroke-linejoin="round"/><path d="M573.1 99.8L589.0 121.9" stroke="#5a5a5a" stroke-width="1.4"/><path d="M580.3 104.6L593.5 99.8L595.9 113.0L585.1 115.7Z" stroke="#e8951a" stroke-width="2" fill="none" stroke-linejoin="round"/><path d="M584.2 107.0L591.4 104.6L592.8 111.4L586.6 113.0Z" stroke="#e8951a" stroke-width="1.1" fill="none" stroke-linejoin="round"/><path d="M223.2 312.5L228.5 326.9" stroke="#5a5a5a" stroke-width="1.1"/><path d="M229.0 326.1L218.3 322.7L222.2 313.2L232.9 316.7Z" stroke="#e8951a" stroke-width="2.2" fill="none" stroke-linejoin="round"/><path d="M227.5 321.5L223.8 320.3L225.1 316.9L228.9 318.1Z" stroke="#b87818" stroke-width="1.0" fill="none" stroke-linejoin="round"/><path d="M575.8 282.2L577.4 255.8" stroke="#5a5a5a" stroke-width="1.1"/><path d="M583.2 274.3L574.8 273.6L575.5 266.2L584.0 266.8Z" stroke="#e8951a" stroke-width="2.2" fill="none" stroke-linejoin="round"/><path d="M581.4 271.2L578.5 270.9L578.7 268.3L581.7 268.6Z" stroke="#b87818" stroke-width="1.0" fill="none" stroke-linejoin="round"/><path d="M568.3 415.7L570.0 396.5" stroke="#5a5a5a" stroke-width="1.1"/><path d="M575.1 410.1L566.6 409.5L567.3 402.0L575.8 402.7Z" stroke="#e8951a" stroke-width="2.2" fill="none" stroke-linejoin="round"/><path d="M573.3 407.0L570.3 406.8L570.6 404.2L573.5 404.4Z" stroke="#b87818" stroke-width="1.0" fill="none" stroke-linejoin="round"/><path d="M232.3 449.0L246.7 441.8" stroke="#5a5a5a" stroke-width="1.1"/><path d="M241.2 451.1L233.1 446.9L237.8 439.8L245.9 443.9Z" stroke="#e8951a" stroke-width="2.2" fill="none" stroke-linejoin="round"/><path d="M240.8 446.9L238.0 445.5L239.6 443.0L242.5 444.4Z" stroke="#b87818" stroke-width="1.0" fill="none" stroke-linejoin="round"/><path d="M445.0 505.9L467.8 508.3" stroke="#5a5a5a" stroke-width="1.1"/><path d="M464.0 518.7L454.7 518.7L454.7 510.5L464.0 510.5Z" stroke="#e8951a" stroke-width="2.2" fill="none" stroke-linejoin="round"/><path d="M461.7 515.5L458.4 515.5L458.4 512.6L461.7 512.6Z" stroke="#b87818" stroke-width="1.0" fill="none" stroke-linejoin="round"/><path d="M558.7 498.2L571.9 491.0" stroke="#5a5a5a" stroke-width="1.1"/><path d="M564.0 508.5L554.9 505.6L558.2 497.5L567.4 500.5Z" stroke="#e8951a" stroke-width="2.2" fill="none" stroke-linejoin="round"/><path d="M562.9 504.5L559.7 503.5L560.8 500.6L564.0 501.7Z" stroke="#b87818" stroke-width="1.0" fill="none" stroke-linejoin="round"/><path d="M316.3 529.9L342.7 531.8" stroke="#5a5a5a" stroke-width="1.1"/><path d="M335.4 542.2L326.1 542.2L326.1 534.0L335.4 534.0Z" stroke="#e8951a" stroke-width="2.2" fill="none" stroke-linejoin="round"/><path d="M333.1 539.0L329.8 539.0L329.8 536.2L333.1 536.2Z" stroke="#b87818" stroke-width="1.0" fill="none" stroke-linejoin="round"/><path d="M243.4 545.3L262.6 546.7" stroke="#5a5a5a" stroke-width="1.1"/><path d="M255.2 557.1L245.9 557.1L245.9 548.9L255.2 548.9Z" stroke="#e8951a" stroke-width="2.2" fill="none" stroke-linejoin="round"/><path d="M252.9 553.9L249.6 553.9L249.6 551.0L252.9 551.0Z" stroke="#b87818" stroke-width="1.0" fill="none" stroke-linejoin="round"/><rect x="330.2" y="279.1" width="61.0" height="17.3" rx="8.6" fill="#086c70"/><path d="M361.0 295.2L369.6 295.2L372.0 314.9Z" fill="#086c70"/><text x="360.7" y="292.4" font-size="13" text-anchor="middle" fill="#6fa9ab" font-family="Liberation Sans,sans-serif">UAV</text><rect x="400.8" y="386.2" width="63.1" height="18.0" rx="9.0" fill="#7c0a0a"/><path d="M427.7 403.0L436.3 403.0L430.6 415.7Z" fill="#7c0a0a"/><text x="432.4" y="399.8" font-size="13" text-anchor="middle" fill="#d08a8a" font-family="Liberation Sans,sans-serif">ERIS</text></svg>
<div style="left:1248.72px;top:84.72px;width:3.84px;height:860.88px;background:#fdfdfd"></div>
<div style="left:314.40px;top:942.24px;width:938.16px;height:3.36px;background:#fdfdfd"></div>
<div style="left:1257.12px;top:83.76px;width:295.20px;height:21.60px;background:linear-gradient(90deg,#cbdaeb,#d6e2f0)"></div>
<span class="t" style="left:1260.96px;top:85.80px;font:15px/18.00px 'Liberation Sans',sans-serif;color:#46505e;transform:scaleX(0.8430);transform-origin:0 50%;">Streaming Properties</span>
<svg style="left:1518.72px;top:88.32px;" width="10.56" height="12.48" viewBox="0 0 10.56 12.48"><path d="M3 1.4h4.8v5.4H3zM1.4 7h8M5.4 7v4.6" stroke="#2a3646" stroke-width="1.2" fill="none"/><path d="M6.6 1.6v5.2" stroke="#2a3646" stroke-width="1.6"/></svg>
<svg style="left:1536.00px;top:89.04px;" width="11.52" height="11.04" viewBox="0 0 11.52 11.04"><path d="M1.6 1.4l8.2 8.2M9.8 1.4L1.6 9.6" stroke="#2a3646" stroke-width="1.7"/></svg>
<div style="left:1264.32px;top:126.24px;width:278.40px;height:248.16px;border:1px solid #dcdfe4;border-radius:3px"></div>
<div style="left:1272.48px;top:120.00px;width:139.20px;height:12.00px;background:#f0f0f0"></div>
<span class="t" style="left:1275.12px;top:116.52px;font:15px/18.00px 'Liberation Sans',sans-serif;color:#111;transform:scaleX(0.7982);transform-origin:0 50%;">NaturalPoint Streaming Engine</span>
<div style="left:1276.80px;top:145.44px;width:12.96px;height:12.96px;background:linear-gradient(135deg,#e6e9ee,#fbfcfd);border:1px solid #8e959e"></div>
<svg style="left:1277.52px;top:145.68px;" width="12.00" height="12.00" viewBox="0 0 12.00 12.00"><path d="M2.6 6l2.6 3.6L9.6 2" stroke="#23327a" stroke-width="2" fill="none"/></svg>
<span class="t" style="left:1294.32px;top:143.16px;font:15px/18.00px 'Liberation Sans',sans-serif;color:#111;transform:scaleX(0.8047);transform-origin:0 50%;">Broadcast Frame Data</span>
<div style="left:1276.32px;top:171.36px;width:256.32px;height:196.97px;background:#fff;border:1px solid #a4a8ae"></div>
<div style="left:1277.28px;top:172.32px;width:18.24px;height:195.05px;background:#c3c3c3"></div>
<div style="left:1277.28px;top:172.32px;width:235.20px;height:21.67px;background:#c3c3c3"></div>
<svg style="left:1280.40px;top:177.64px" width="11" height="11" viewBox="0 0 9 9"><rect x="0.6" y="0.6" width="7.8" height="7.8" fill="none" stroke="#3a3a3a" stroke-width="1.1"/><path d="M2.2 4.5h4.6" stroke="#1c1c1c" stroke-width="1.1"/></svg>
<span class="t" style="left:1299.36px;top:174.16px;font:bold 15px/18.00px 'Liberation Sans',sans-serif;color:#7c7c7c;transform:scaleX(0.8853);transform-origin:0 50%;">Streaming Options</span>
<div style="left:1295.52px;top:214.66px;width:216.96px;height:1.01px;background:#d4d4d4"></div>
<span class="t" style="left:1299.36px;top:195.83px;font:15px/18.00px 'Liberation Sans',sans-serif;color:#111;transform:scaleX(0.8658);transform-origin:0 50%;">Stream Markers</span>
<span class="t" style="left:1409.52px;top:195.83px;font:15px/18.00px 'Liberation Sans',sans-serif;color:#111;transform:scaleX(0.8560);transform-origin:0 50%;">True</span>
<div style="left:1295.52px;top:236.33px;width:216.96px;height:1.01px;background:#d4d4d4"></div>
<span class="t" style="left:1299.36px;top:217.50px;font:15px/18.00px 'Liberation Sans',sans-serif;color:#111;transform:scaleX(0.8735);transform-origin:0 50%;">Stream Rigid Bodi</span>
<span class="t" style="left:1409.52px;top:217.50px;font:15px/18.00px 'Liberation Sans',sans-serif;color:#111;transform:scaleX(0.8560);transform-origin:0 50%;">True</span>
<div style="left:1277.28px;top:237.34px;width:235.20px;height:21.67px;background:#c3c3c3"></div>
<svg style="left:1280.40px;top:242.65px" width="11" height="11" viewBox="0 0 9 9"><rect x="0.6" y="0.6" width="7.8" height="7.8" fill="none" stroke="#3a3a3a" stroke-width="1.1"/><path d="M2.2 4.5h4.6" stroke="#1c1c1c" stroke-width="1.1"/></svg>
<span class="t" style="left:1299.36px;top:239.17px;font:bold 15px/18.00px 'Liberation Sans',sans-serif;color:#7c7c7c;transform:scaleX(0.9099);transform-origin:0 50%;">Network Options</span>
<div style="left:1295.52px;top:279.67px;width:216.96px;height:1.01px;background:#d4d4d4"></div>
<span class="t" style="left:1299.36px;top:260.84px;font:15px/18.00px 'Liberation Sans',sans-serif;color:#111;transform:scaleX(0.7972);transform-origin:0 50%;">Type</span>
<span class="t" style="left:1409.52px;top:260.84px;font:15px/18.00px 'Liberation Sans',sans-serif;color:#111;transform:scaleX(0.9326);transform-origin:0 50%;">Multicast</span>
<div style="left:1295.52px;top:301.34px;width:216.96px;height:1.01px;background:#d4d4d4"></div>
<span class="t" style="left:1299.36px;top:282.52px;font:15px/18.00px 'Liberation Sans',sans-serif;color:#111;transform:scaleX(0.9158);transform-origin:0 50%;">Command Port</span>
<span class="t" style="left:1409.52px;top:282.52px;font:15px/18.00px 'Liberation Sans',sans-serif;color:#111;transform:scaleX(0.7766);transform-origin:0 50%;">1510</span>
<div style="left:1295.52px;top:323.02px;width:216.96px;height:1.01px;background:#d4d4d4"></div>
<span class="t" style="left:1299.36px;top:304.19px;font:15px/18.00px 'Liberation Sans',sans-serif;color:#111;transform:scaleX(0.8483);transform-origin:0 50%;">Data Port</span>
<span class="t" style="left:1409.52px;top:304.19px;font:15px/18.00px 'Liberation Sans',sans-serif;color:#111;transform:scaleX(0.8033);transform-origin:0 50%;">1511</span>
<div style="left:1277.28px;top:324.02px;width:235.20px;height:21.67px;background:#c3c3c3"></div>
<svg style="left:1280.40px;top:329.34px" width="11" height="11" viewBox="0 0 9 9"><rect x="0.6" y="0.6" width="7.8" height="7.8" fill="none" stroke="#3a3a3a" stroke-width="1.1"/><path d="M2.2 4.5h4.6" stroke="#1c1c1c" stroke-width="1.1"/></svg>
<span class="t" style="left:1299.36px;top:325.86px;font:bold 15px/18.00px 'Liberation Sans',sans-serif;color:#7c7c7c;transform:scaleX(0.9270);transform-origin:0 50%;">Network Interface Selection</span>
<div style="left:1295.52px;top:366.36px;width:216.96px;height:1.01px;background:#d4d4d4"></div>
<span class="t" style="left:1299.36px;top:347.53px;font:15px/18.00px 'Liberation Sans',sans-serif;color:#111;transform:scaleX(0.8779);transform-origin:0 50%;">Local Interface</span>
<span class="t" style="left:1409.52px;top:347.53px;font:15px/18.00px 'Liberation Sans',sans-serif;color:#111;transform:scaleX(0.8634);transform-origin:0 50%;">Preferred</span>
<div style="left:1405.20px;top:193.99px;width:1.01px;height:21.67px;background:#d4d4d4"></div>
<div style="left:1405.20px;top:215.66px;width:1.01px;height:21.67px;background:#d4d4d4"></div>
<div style="left:1405.20px;top:259.01px;width:1.01px;height:21.67px;background:#d4d4d4"></div>
<div style="left:1405.20px;top:280.68px;width:1.01px;height:21.67px;background:#d4d4d4"></div>
<div style="left:1405.20px;top:302.35px;width:1.01px;height:21.67px;background:#d4d4d4"></div>
<div style="left:1405.20px;top:345.70px;width:1.01px;height:21.67px;background:#d4d4d4"></div>
<div style="left:1512.48px;top:172.32px;width:19.20px;height:195.05px;background:#eeeff1;border-left:1px solid #dcdde0"></div>
<svg style="left:1517.52px;top:180.48px;" width="9.12" height="5.76" viewBox="0 0 9.12 5.76"><path d="M0.4 5.2L4.5 0.6l4.1 4.6z" fill="#404040"/></svg>
<svg style="left:1517.52px;top:353.93px;" width="9.12" height="5.76" viewBox="0 0 9.12 5.76"><path d="M0.4 0.6L4.5 5.2l4.1-4.6z" fill="#404040"/></svg>
<div style="left:1513.68px;top:195.60px;width:16.80px;height:113.04px;background:linear-gradient(90deg,#f2f2f3,#d9dadd 50%,#c8cacf);border:1px solid #9a9da3;border-radius:2px"></div>
<div style="left:1518.24px;top:249.48px;width:7.68px;height:1.01px;background:#6a6d74"></div>
<div style="left:1518.24px;top:251.64px;width:7.68px;height:1.01px;background:#6a6d74"></div>
<div style="left:1518.24px;top:253.80px;width:7.68px;height:1.01px;background:#6a6d74"></div>
<div style="left:1264.32px;top:399.12px;width:278.40px;height:66.72px;border:1px solid #dcdfe4;border-radius:3px"></div>
<div style="left:1272.48px;top:392.64px;width:109.20px;height:12.00px;background:#f0f0f0"></div>
<span class="t" style="left:1275.12px;top:390.12px;font:15px/18.00px 'Liberation Sans',sans-serif;color:#111;transform:scaleX(0.7676);transform-origin:0 50%;">VRPN Streaming Engine</span>
<div style="left:1276.80px;top:416.64px;width:12.96px;height:12.96px;background:linear-gradient(135deg,#e6e9ee,#fbfcfd);border:1px solid #8e959e"></div>
<svg style="left:1277.52px;top:416.88px;" width="12.00" height="12.00" viewBox="0 0 12.00 12.00"><path d="M2.6 6l2.6 3.6L9.6 2" stroke="#23327a" stroke-width="2" fill="none"/></svg>
<span class="t" style="left:1294.32px;top:414.36px;font:15px/18.00px 'Liberation Sans',sans-serif;color:#111;transform:scaleX(0.8047);transform-origin:0 50%;">Broadcast Frame Data</span>
<span class="t" style="left:1323.12px;top:439.80px;font:15px/18.00px 'Liberation Sans',sans-serif;color:#111;transform:scaleX(0.7908);transform-origin:0 50%;">VRPN Broadcast Port</span>
<div style="left:1448.64px;top:436.80px;width:82.08px;height:21.36px;background:#f4f4f4;border:1px solid #b4b8be"></div>
<span class="t" style="left:1455.36px;top:438.60px;font:15px/18.00px 'Liberation Sans',sans-serif;color:#8a8a8a;transform:scaleX(0.7910);transform-origin:0 50%;">3883</span>
<div style="left:1264.32px;top:489.12px;width:278.40px;height:42.24px;border:1px solid #dcdfe4;border-radius:3px"></div>
<div style="left:1272.48px;top:482.88px;width:112.80px;height:12.00px;background:#f0f0f0"></div>
<span class="t" style="left:1275.12px;top:480.12px;font:15px/18.00px 'Liberation Sans',sans-serif;color:#111;transform:scaleX(0.7938);transform-origin:0 50%;">Trackd Streaming Engine</span>
<div style="left:1276.80px;top:505.68px;width:12.96px;height:12.96px;background:linear-gradient(135deg,#e6e9ee,#fbfcfd);border:1px solid #8e959e"></div>
<span class="t" style="left:1294.32px;top:503.40px;font:15px/18.00px 'Liberation Sans',sans-serif;color:#111;transform:scaleX(0.8047);transform-origin:0 50%;">Broadcast Frame Data</span>
<div style="left:1552.80px;top:84.72px;width:5.76px;height:1046.40px;background:#e4e7ec"></div>
<div style="left:1558.56px;top:83.76px;width:361.44px;height:21.60px;background:linear-gradient(90deg,#b4c6dc 0,#b9cae0 35%,#d3dfee 100%)"></div>
<span class="t" style="left:1562.40px;top:85.80px;font:15px/18.00px 'Liberation Sans',sans-serif;color:#46505e;transform:scaleX(0.8638);transform-origin:0 50%;">Trackables</span>
<svg style="left:1886.40px;top:88.32px;" width="10.56" height="12.48" viewBox="0 0 10.56 12.48"><path d="M3 1.4h4.8v5.4H3zM1.4 7h8M5.4 7v4.6" stroke="#2a3646" stroke-width="1.2" fill="none"/><path d="M6.6 1.6v5.2" stroke="#2a3646" stroke-width="1.6"/></svg>
<svg style="left:1903.68px;top:89.04px;" width="11.52" height="11.04" viewBox="0 0 11.52 11.04"><path d="M1.6 1.4l8.2 8.2M9.8 1.4L1.6 9.6" stroke="#2a3646" stroke-width="1.7"/></svg>
<div style="left:1558.56px;top:105.36px;width:361.44px;height:27.36px;background:#fefefe"></div>
<div style="left:1561.44px;top:108.00px;width:78.24px;height:24.48px;background:#fff"></div>
<span class="t" style="left:1567.20px;top:111.00px;font:bold 15px/18.00px 'Liberation Sans',sans-serif;color:#1a1a1a;transform:scaleX(0.8107);transform-origin:0 50%;-webkit-text-stroke:0;">Trackables</span>
<div style="left:1639.68px;top:109.44px;width:1.01px;height:22.08px;background:#555"></div>
<span class="t" style="left:1645.44px;top:111.00px;font:15px/18.00px 'Liberation Sans',sans-serif;color:#777;transform:scaleX(0.9222);transform-origin:0 50%;">Orientation</span>
<div style="left:1719.36px;top:109.44px;width:1.01px;height:22.08px;background:#777"></div>
<span class="t" style="left:1726.56px;top:111.00px;font:15px/18.00px 'Liberation Sans',sans-serif;color:#777;transform:scaleX(0.8980);transform-origin:0 50%;">Real-Time Info</span>
<div style="left:1824.72px;top:109.44px;width:1.01px;height:22.08px;background:#8a8a8a"></div>
<svg style="left:1887.36px;top:115.20px;" width="7.20" height="9.60" viewBox="0 0 7.20 9.60"><path d="M6.4 1L1.2 4.8l5.2 3.8z" fill="none" stroke="#7e8694" stroke-width="1"/></svg>
<svg style="left:1902.24px;top:115.20px;" width="7.20" height="9.60" viewBox="0 0 7.20 9.60"><path d="M0.8 1l5.2 3.8L0.8 8.6z" fill="none" stroke="#7e8694" stroke-width="1"/></svg>
<div style="left:1567.20px;top:152.16px;width:342.72px;height:52.32px;border:1px solid #dcdfe4;border-radius:3px"></div>
<div style="left:1576.80px;top:145.92px;width:55.20px;height:12.00px;background:#f0f0f0"></div>
<span class="t" style="left:1579.68px;top:143.16px;font:15px/18.00px 'Liberation Sans',sans-serif;color:#111;transform:scaleX(0.7912);transform-origin:0 50%;">Trackables</span>
<div style="left:1581.12px;top:168.00px;width:116.64px;height:23.28px;background:linear-gradient(#eaf6fd,#d9f0fc 48%,#bee6fd 52%,#a7d9f5);border:1px solid #3c7fb1;border-radius:3px;box-shadow:inset 0 0 0 1px #48d8fb"></div>
<span class="t" style="left:1586.40px;top:170.76px;font:15px/18.00px 'Liberation Sans',sans-serif;color:#000;transform:scaleX(0.7910);transform-origin:0 50%;">Create From Visible</span>
<div style="left:1766.88px;top:168.00px;width:130.08px;height:23.28px;background:linear-gradient(#f4f4f4,#ebebeb 48%,#dddddd 52%,#cfcfcf);border:1px solid #707070;border-radius:3px"></div>
<span class="t" style="left:1771.20px;top:170.76px;font:15px/18.00px 'Liberation Sans',sans-serif;color:#000;transform:scaleX(0.8060);transform-origin:0 50%;">Create From Selection</span>
<div style="left:1567.20px;top:218.40px;width:342.72px;height:777.60px;border:1px solid #dcdfe4;border-radius:3px"></div>
<div style="left:1576.80px;top:212.16px;width:98.40px;height:12.00px;background:#f0f0f0"></div>
<span class="t" style="left:1579.68px;top:209.40px;font:15px/18.00px 'Liberation Sans',sans-serif;color:#111;transform:scaleX(0.8073);transform-origin:0 50%;">Trackable Settings</span>
<div style="left:1579.20px;top:233.28px;width:321.12px;height:675.24px;background:#fff;border:1px solid #a4a8ae"></div>
<div style="left:1580.16px;top:234.24px;width:16.32px;height:673.32px;background:#c3c3c3"></div>
<div style="left:1580.16px;top:234.24px;width:300.00px;height:21.72px;background:#c3c3c3"></div>
<svg style="left:1583.28px;top:239.58px" width="11" height="11" viewBox="0 0 9 9"><rect x="0.6" y="0.6" width="7.8" height="7.8" fill="none" stroke="#3a3a3a" stroke-width="1.1"/><path d="M2.2 4.5h4.6" stroke="#1c1c1c" stroke-width="1.1"/></svg>
<span class="t" style="left:1600.32px;top:236.10px;font:bold 15px/18.00px 'Liberation Sans',sans-serif;color:#7c7c7c;transform:scaleX(0.8939);transform-origin:0 50%;">General Properties</span>
<div style="left:1596.48px;top:276.67px;width:283.68px;height:1.01px;background:#d4d4d4"></div>
<span class="t" style="left:1600.32px;top:257.82px;font:15px/18.00px 'Liberation Sans',sans-serif;color:#111;transform:scaleX(0.7557);transform-origin:0 50%;">Name</span>
<span class="t" style="left:1744.56px;top:257.82px;font:15px/18.00px 'Liberation Sans',sans-serif;color:#111;transform:scaleX(0.8560);transform-origin:0 50%;">UAV</span>
<div style="left:1596.48px;top:298.39px;width:283.68px;height:1.01px;background:#d4d4d4"></div>
<span class="t" style="left:1600.32px;top:279.54px;font:15px/18.00px 'Liberation Sans',sans-serif;color:#111;transform:scaleX(0.7899);transform-origin:0 50%;">Trackable ID</span>
<span class="t" style="left:1744.56px;top:279.54px;font:15px/18.00px 'Liberation Sans',sans-serif;color:#111;transform:scaleX(0.7479);transform-origin:0 50%;">2</span>
<div style="left:1580.16px;top:299.40px;width:300.00px;height:21.72px;background:#c3c3c3"></div>
<svg style="left:1583.28px;top:304.74px" width="11" height="11" viewBox="0 0 9 9"><rect x="0.6" y="0.6" width="7.8" height="7.8" fill="none" stroke="#3a3a3a" stroke-width="1.1"/><path d="M2.2 4.5h4.6" stroke="#1c1c1c" stroke-width="1.1"/></svg>
<span class="t" style="left:1600.32px;top:301.26px;font:bold 15px/18.00px 'Liberation Sans',sans-serif;color:#7c7c7c;transform:scaleX(0.8924);transform-origin:0 50%;">Solver Parameters</span>
<div style="left:1596.48px;top:341.83px;width:283.68px;height:1.01px;background:#d4d4d4"></div>
<span class="t" style="left:1600.32px;top:322.98px;font:15px/18.00px 'Liberation Sans',sans-serif;color:#111;transform:scaleX(0.8458);transform-origin:0 50%;">Enabled</span>
<span class="t" style="left:1744.56px;top:322.98px;font:15px/18.00px 'Liberation Sans',sans-serif;color:#111;transform:scaleX(0.8560);transform-origin:0 50%;">True</span>
<div style="left:1596.48px;top:363.55px;width:283.68px;height:1.01px;background:#d4d4d4"></div>
<span class="t" style="left:1600.32px;top:344.70px;font:15px/18.00px 'Liberation Sans',sans-serif;color:#111;transform:scaleX(0.8987);transform-origin:0 50%;">Max Marker Deflection</span>
<span class="t" style="left:1744.56px;top:344.70px;font:15px/18.00px 'Liberation Sans',sans-serif;color:#111;transform:scaleX(0.7479);transform-origin:0 50%;">8</span>
<div style="left:1596.48px;top:385.27px;width:283.68px;height:1.01px;background:#d4d4d4"></div>
<span class="t" style="left:1600.32px;top:366.42px;font:15px/18.00px 'Liberation Sans',sans-serif;color:#111;transform:scaleX(0.9259);transform-origin:0 50%;">Min Marker Count</span>
<span class="t" style="left:1744.56px;top:366.42px;font:15px/18.00px 'Liberation Sans',sans-serif;color:#111;transform:scaleX(0.7479);transform-origin:0 50%;">4</span>
<div style="left:1596.48px;top:406.99px;width:283.68px;height:1.01px;background:#d4d4d4"></div>
<span class="t" style="left:1600.32px;top:388.14px;font:15px/18.00px 'Liberation Sans',sans-serif;color:#111;transform:scaleX(0.9402);transform-origin:0 50%;">Min Hit Count</span>
<span class="t" style="left:1744.56px;top:388.14px;font:15px/18.00px 'Liberation Sans',sans-serif;color:#111;transform:scaleX(0.7479);transform-origin:0 50%;">2</span>
<div style="left:1596.48px;top:428.71px;width:283.68px;height:1.01px;background:#d4d4d4"></div>
<span class="t" style="left:1600.32px;top:409.86px;font:15px/18.00px 'Liberation Sans',sans-serif;color:#111;transform:scaleX(0.8875);transform-origin:0 50%;">Flexibility</span>
<span class="t" style="left:1744.56px;top:409.86px;font:15px/18.00px 'Liberation Sans',sans-serif;color:#111;transform:scaleX(0.7766);transform-origin:0 50%;">50</span>
<div style="left:1596.48px;top:450.43px;width:283.68px;height:1.01px;background:#d4d4d4"></div>
<span class="t" style="left:1600.32px;top:431.58px;font:15px/18.00px 'Liberation Sans',sans-serif;color:#111;transform:scaleX(0.8537);transform-origin:0 50%;">Share Markers</span>
<span class="t" style="left:1744.56px;top:431.58px;font:15px/18.00px 'Liberation Sans',sans-serif;color:#111;transform:scaleX(0.7984);transform-origin:0 50%;">False</span>
<div style="left:1596.48px;top:472.15px;width:283.68px;height:1.01px;background:#d4d4d4"></div>
<span class="t" style="left:1600.32px;top:453.30px;font:15px/18.00px 'Liberation Sans',sans-serif;color:#111;transform:scaleX(0.8996);transform-origin:0 50%;">Dynamic Override</span>
<span class="t" style="left:1744.56px;top:453.30px;font:15px/18.00px 'Liberation Sans',sans-serif;color:#111;transform:scaleX(0.7862);transform-origin:0 50%;">100</span>
<div style="left:1596.48px;top:493.87px;width:283.68px;height:1.01px;background:#d4d4d4"></div>
<span class="t" style="left:1600.32px;top:475.02px;font:15px/18.00px 'Liberation Sans',sans-serif;color:#111;transform:scaleX(0.8708);transform-origin:0 50%;">Static Override</span>
<span class="t" style="left:1744.56px;top:475.02px;font:15px/18.00px 'Liberation Sans',sans-serif;color:#111;transform:scaleX(0.7479);transform-origin:0 50%;">0</span>
<div style="left:1596.48px;top:515.59px;width:283.68px;height:1.01px;background:#d4d4d4"></div>
<span class="t" style="left:1600.32px;top:496.74px;font:15px/18.00px 'Liberation Sans',sans-serif;color:#111;transform:scaleX(0.8842);transform-origin:0 50%;">Precise Orientation</span>
<span class="t" style="left:1744.56px;top:496.74px;font:15px/18.00px 'Liberation Sans',sans-serif;color:#111;transform:scaleX(0.8560);transform-origin:0 50%;">True</span>
<div style="left:1596.48px;top:537.31px;width:283.68px;height:1.01px;background:#d4d4d4"></div>
<span class="t" style="left:1600.32px;top:518.46px;font:15px/18.00px 'Liberation Sans',sans-serif;color:#111;transform:scaleX(0.8491);transform-origin:0 50%;">Force Exhaustive</span>
<span class="t" style="left:1744.56px;top:518.46px;font:15px/18.00px 'Liberation Sans',sans-serif;color:#111;transform:scaleX(0.7984);transform-origin:0 50%;">False</span>
<div style="left:1596.48px;top:559.03px;width:283.68px;height:1.01px;background:#d4d4d4"></div>
<span class="t" style="left:1600.32px;top:540.18px;font:15px/18.00px 'Liberation Sans',sans-serif;color:#111;transform:scaleX(0.9178);transform-origin:0 50%;">Calculation Time</span>
<span class="t" style="left:1744.56px;top:540.18px;font:15px/18.00px 'Liberation Sans',sans-serif;color:#111;transform:scaleX(0.7479);transform-origin:0 50%;">5</span>
<div style="left:1596.48px;top:580.75px;width:283.68px;height:1.01px;background:#d4d4d4"></div>
<span class="t" style="left:1600.32px;top:561.90px;font:15px/18.00px 'Liberation Sans',sans-serif;color:#111;transform:scaleX(0.9054);transform-origin:0 50%;">Acquisition Delay</span>
<span class="t" style="left:1744.56px;top:561.90px;font:15px/18.00px 'Liberation Sans',sans-serif;color:#111;transform:scaleX(0.7479);transform-origin:0 50%;">5</span>
<div style="left:1580.16px;top:581.76px;width:300.00px;height:21.72px;background:#c3c3c3"></div>
<svg style="left:1583.28px;top:587.10px" width="11" height="11" viewBox="0 0 9 9"><rect x="0.6" y="0.6" width="7.8" height="7.8" fill="none" stroke="#3a3a3a" stroke-width="1.1"/><path d="M2.2 4.5h4.6" stroke="#1c1c1c" stroke-width="1.1"/></svg>
<span class="t" style="left:1600.32px;top:583.62px;font:bold 15px/18.00px 'Liberation Sans',sans-serif;color:#7c7c7c;transform:scaleX(0.8491);transform-origin:0 50%;">Display Options</span>
<div style="left:1596.48px;top:624.19px;width:283.68px;height:1.01px;background:#d4d4d4"></div>
<span class="t" style="left:1600.32px;top:605.34px;font:15px/18.00px 'Liberation Sans',sans-serif;color:#111;transform:scaleX(0.8035);transform-origin:0 50%;">Color</span>
<div style="left:1743.60px;top:606.36px;width:21.60px;height:15.48px;background:#00fbff;border:1px solid #222"></div>
<span class="t" style="left:1771.92px;top:605.34px;font:15px/18.00px 'Liberation Sans',sans-serif;color:#111;transform:scaleX(0.8310);transform-origin:0 50%;">0; 251; 255</span>
<div style="left:1596.48px;top:645.91px;width:283.68px;height:1.01px;background:#d4d4d4"></div>
<span class="t" style="left:1600.32px;top:627.06px;font:15px/18.00px 'Liberation Sans',sans-serif;color:#111;transform:scaleX(0.8370);transform-origin:0 50%;">Label</span>
<span class="t" style="left:1744.56px;top:627.06px;font:15px/18.00px 'Liberation Sans',sans-serif;color:#111;transform:scaleX(0.8560);transform-origin:0 50%;">True</span>
<div style="left:1596.48px;top:667.63px;width:283.68px;height:1.01px;background:#d4d4d4"></div>
<span class="t" style="left:1600.32px;top:648.78px;font:15px/18.00px 'Liberation Sans',sans-serif;color:#111;transform:scaleX(0.8683);transform-origin:0 50%;">Tracked</span>
<span class="t" style="left:1744.56px;top:648.78px;font:15px/18.00px 'Liberation Sans',sans-serif;color:#111;transform:scaleX(0.8560);transform-origin:0 50%;">True</span>
<div style="left:1596.48px;top:689.35px;width:283.68px;height:1.01px;background:#d4d4d4"></div>
<span class="t" style="left:1600.32px;top:670.50px;font:15px/18.00px 'Liberation Sans',sans-serif;color:#111;transform:scaleX(0.8916);transform-origin:0 50%;">Untracked</span>
<span class="t" style="left:1744.56px;top:670.50px;font:15px/18.00px 'Liberation Sans',sans-serif;color:#111;transform:scaleX(0.8560);transform-origin:0 50%;">True</span>
<div style="left:1596.48px;top:711.07px;width:283.68px;height:1.01px;background:#d4d4d4"></div>
<span class="t" style="left:1600.32px;top:692.22px;font:15px/18.00px 'Liberation Sans',sans-serif;color:#111;transform:scaleX(0.8637);transform-origin:0 50%;">Pivot</span>
<span class="t" style="left:1744.56px;top:692.22px;font:15px/18.00px 'Liberation Sans',sans-serif;color:#111;transform:scaleX(0.8560);transform-origin:0 50%;">True</span>
<div style="left:1596.48px;top:732.79px;width:283.68px;height:1.01px;background:#d4d4d4"></div>
<span class="t" style="left:1600.32px;top:713.94px;font:15px/18.00px 'Liberation Sans',sans-serif;color:#111;transform:scaleX(0.8825);transform-origin:0 50%;">Untracked Markers</span>
<span class="t" style="left:1744.56px;top:713.94px;font:15px/18.00px 'Liberation Sans',sans-serif;color:#111;transform:scaleX(0.8560);transform-origin:0 50%;">True</span>
<div style="left:1596.48px;top:754.51px;width:283.68px;height:1.01px;background:#d4d4d4"></div>
<span class="t" style="left:1600.32px;top:735.66px;font:15px/18.00px 'Liberation Sans',sans-serif;color:#111;transform:scaleX(0.8945);transform-origin:0 50%;">Quality</span>
<span class="t" style="left:1744.56px;top:735.66px;font:15px/18.00px 'Liberation Sans',sans-serif;color:#111;transform:scaleX(0.8560);transform-origin:0 50%;">True</span>
<div style="left:1596.48px;top:776.23px;width:283.68px;height:1.01px;background:#d4d4d4"></div>
<span class="t" style="left:1600.32px;top:757.38px;font:15px/18.00px 'Liberation Sans',sans-serif;color:#111;transform:scaleX(0.9005);transform-origin:0 50%;">Marker Quality</span>
<span class="t" style="left:1744.56px;top:757.38px;font:15px/18.00px 'Liberation Sans',sans-serif;color:#111;transform:scaleX(0.7984);transform-origin:0 50%;">False</span>
<div style="left:1596.48px;top:797.95px;width:283.68px;height:1.01px;background:#d4d4d4"></div>
<span class="t" style="left:1600.32px;top:779.10px;font:15px/18.00px 'Liberation Sans',sans-serif;color:#111;transform:scaleX(0.9222);transform-origin:0 50%;">Orientation</span>
<span class="t" style="left:1744.56px;top:779.10px;font:15px/18.00px 'Liberation Sans',sans-serif;color:#111;transform:scaleX(0.7984);transform-origin:0 50%;">False</span>
<div style="left:1596.48px;top:819.67px;width:283.68px;height:1.01px;background:#d4d4d4"></div>
<span class="t" style="left:1600.32px;top:800.82px;font:15px/18.00px 'Liberation Sans',sans-serif;color:#111;transform:scaleX(0.8779);transform-origin:0 50%;">Model Replace</span>
<span class="t" style="left:1744.56px;top:800.82px;font:15px/18.00px 'Liberation Sans',sans-serif;color:#111;transform:scaleX(0.8560);transform-origin:0 50%;">True</span>
<div style="left:1596.48px;top:841.39px;width:283.68px;height:1.01px;background:#d4d4d4"></div>
<svg style="left:1583.28px;top:826.02px" width="11" height="11" viewBox="0 0 9 9"><rect x="0.6" y="0.6" width="7.8" height="7.8" fill="none" stroke="#3a3a3a" stroke-width="1.1"/><path d="M2.2 4.5h4.6" stroke="#1c1c1c" stroke-width="1.1"/><path d="M4.5 2.2v4.6" stroke="#1c1c1c" stroke-width="1.1"/></svg>
<span class="t" style="left:1600.32px;top:822.54px;font:15px/18.00px 'Liberation Sans',sans-serif;color:#111;transform:scaleX(0.8733);transform-origin:0 50%;">3DS Model</span>
<div style="left:1580.16px;top:842.40px;width:300.00px;height:21.72px;background:#c3c3c3"></div>
<svg style="left:1583.28px;top:847.74px" width="11" height="11" viewBox="0 0 9 9"><rect x="0.6" y="0.6" width="7.8" height="7.8" fill="none" stroke="#3a3a3a" stroke-width="1.1"/><path d="M2.2 4.5h4.6" stroke="#1c1c1c" stroke-width="1.1"/></svg>
<span class="t" style="left:1600.32px;top:844.26px;font:bold 15px/18.00px 'Liberation Sans',sans-serif;color:#7c7c7c;transform:scaleX(0.8570);transform-origin:0 50%;">Display History</span>
<div style="left:1596.48px;top:884.83px;width:283.68px;height:1.01px;background:#d4d4d4"></div>
<span class="t" style="left:1600.32px;top:865.98px;font:15px/18.00px 'Liberation Sans',sans-serif;color:#111;transform:scaleX(0.9121);transform-origin:0 50%;">Position History</span>
<span class="t" style="left:1744.56px;top:865.98px;font:15px/18.00px 'Liberation Sans',sans-serif;color:#111;transform:scaleX(0.7984);transform-origin:0 50%;">False</span>
<div style="left:1596.48px;top:906.55px;width:283.68px;height:1.01px;background:#d4d4d4"></div>
<span class="t" style="left:1600.32px;top:887.70px;font:15px/18.00px 'Liberation Sans',sans-serif;color:#111;transform:scaleX(0.9196);transform-origin:0 50%;">Orientation History</span>
<span class="t" style="left:1744.56px;top:887.70px;font:15px/18.00px 'Liberation Sans',sans-serif;color:#111;transform:scaleX(0.7984);transform-origin:0 50%;">False</span>
<div style="left:1740.24px;top:255.96px;width:1.01px;height:21.72px;background:#d4d4d4"></div>
<div style="left:1740.24px;top:277.68px;width:1.01px;height:21.72px;background:#d4d4d4"></div>
<div style="left:1740.24px;top:321.12px;width:1.01px;height:21.72px;background:#d4d4d4"></div>
<div style="left:1740.24px;top:342.84px;width:1.01px;height:21.72px;background:#d4d4d4"></div>
<div style="left:1740.24px;top:364.56px;width:1.01px;height:21.72px;background:#d4d4d4"></div>
<div style="left:1740.24px;top:386.28px;width:1.01px;height:21.72px;background:#d4d4d4"></div>
<div style="left:1740.24px;top:408.00px;width:1.01px;height:21.72px;background:#d4d4d4"></div>
<div style="left:1740.24px;top:429.72px;width:1.01px;height:21.72px;background:#d4d4d4"></div>
<div style="left:1740.24px;top:451.44px;width:1.01px;height:21.72px;background:#d4d4d4"></div>
<div style="left:1740.24px;top:473.16px;width:1.01px;height:21.72px;background:#d4d4d4"></div>
<div style="left:1740.24px;top:494.88px;width:1.01px;height:21.72px;background:#d4d4d4"></div>
<div style="left:1740.24px;top:516.60px;width:1.01px;height:21.72px;background:#d4d4d4"></div>
<div style="left:1740.24px;top:538.32px;width:1.01px;height:21.72px;background:#d4d4d4"></div>
<div style="left:1740.24px;top:560.04px;width:1.01px;height:21.72px;background:#d4d4d4"></div>
<div style="left:1740.24px;top:603.48px;width:1.01px;height:21.72px;background:#d4d4d4"></div>
<div style="left:1740.24px;top:625.20px;width:1.01px;height:21.72px;background:#d4d4d4"></div>
<div style="left:1740.24px;top:646.92px;width:1.01px;height:21.72px;background:#d4d4d4"></div>
<div style="left:1740.24px;top:668.64px;width:1.01px;height:21.72px;background:#d4d4d4"></div>
<div style="left:1740.24px;top:690.36px;width:1.01px;height:21.72px;background:#d4d4d4"></div>
<div style="left:1740.24px;top:712.08px;width:1.01px;height:21.72px;background:#d4d4d4"></div>
<div style="left:1740.24px;top:733.80px;width:1.01px;height:21.72px;background:#d4d4d4"></div>
<div style="left:1740.24px;top:755.52px;width:1.01px;height:21.72px;background:#d4d4d4"></div>
<div style="left:1740.24px;top:777.24px;width:1.01px;height:21.72px;background:#d4d4d4"></div>
<div style="left:1740.24px;top:798.96px;width:1.01px;height:21.72px;background:#d4d4d4"></div>
<div style="left:1740.24px;top:820.68px;width:1.01px;height:21.72px;background:#d4d4d4"></div>
<div style="left:1740.24px;top:864.12px;width:1.01px;height:21.72px;background:#d4d4d4"></div>
<div style="left:1740.24px;top:885.84px;width:1.01px;height:21.72px;background:#d4d4d4"></div>
<div style="left:1880.16px;top:234.24px;width:19.20px;height:673.32px;background:#eeeff1;border-left:1px solid #dcdde0"></div>
<svg style="left:1885.20px;top:242.40px;" width="9.12" height="5.76" viewBox="0 0 9.12 5.76"><path d="M0.4 5.2L4.5 0.6l4.1 4.6z" fill="#404040"/></svg>
<svg style="left:1885.20px;top:894.12px;" width="9.12" height="5.76" viewBox="0 0 9.12 5.76"><path d="M0.4 0.6L4.5 5.2l4.1-4.6z" fill="#404040"/></svg>
<div style="left:1881.36px;top:256.80px;width:16.80px;height:402.72px;background:linear-gradient(90deg,#f2f2f3,#d9dadd 50%,#c8cacf);border:1px solid #9a9da3;border-radius:2px"></div>
<div style="left:1885.92px;top:455.52px;width:7.68px;height:1.01px;background:#6a6d74"></div>
<div style="left:1885.92px;top:457.68px;width:7.68px;height:1.01px;background:#6a6d74"></div>
<div style="left:1885.92px;top:459.84px;width:7.68px;height:1.01px;background:#6a6d74"></div>
<div style="left:1579.92px;top:913.92px;width:319.68px;height:70.56px;background:#f2f2f2;border:1px solid #a4a8ae"></div>
<div style="left:1567.20px;top:1008.48px;width:342.72px;height:86.40px;border:1px solid #dcdfe4;border-radius:3px"></div>
<div style="left:1576.80px;top:1002.24px;width:151.20px;height:12.00px;background:#f0f0f0"></div>
<span class="t" style="left:1579.68px;top:999.48px;font:15px/18.00px 'Liberation Sans',sans-serif;color:#111;transform:scaleX(0.7984);transform-origin:0 50%;">Trackable Engine Statistics</span>
<span class="t" style="left:1633.44px;top:1020.84px;font:15px/18.00px 'Liberation Sans',sans-serif;color:#111;transform:scaleX(0.8833);transform-origin:0 50%;">Defined Trackables: 2</span>
<span class="t" style="left:1633.44px;top:1038.12px;font:15px/18.00px 'Liberation Sans',sans-serif;color:#111;transform:scaleX(0.8635);transform-origin:0 50%;">Process Time: 0.013 msec</span>
<span class="t" style="left:1633.44px;top:1055.40px;font:15px/18.00px 'Liberation Sans',sans-serif;color:#111;transform:scaleX(0.9049);transform-origin:0 50%;">Batches/Partitions: 0/0</span>
<span class="t" style="left:1633.44px;top:1072.68px;font:15px/18.00px 'Liberation Sans',sans-serif;color:#111;transform:scaleX(0.8908);transform-origin:0 50%;">Trackable StrikeTests/Tests: 0/0</span>
<div style="left:1558.56px;top:1107.84px;width:361.44px;height:22.56px;background:#f0f0f0;border-top:1px solid #a8acb4"></div>
<div style="left:1561.44px;top:1108.80px;width:133.44px;height:20.64px;background:#f4f4f5;border:1px solid #c4c8ce;border-top:none"></div>
<span class="t" style="left:1567.20px;top:1109.88px;font:15px/18.00px 'Liberation Sans',sans-serif;color:#777;transform:scaleX(0.9112);transform-origin:0 50%;">3-Marker Calibration</span>
<div style="left:1698.24px;top:1108.80px;width:135.84px;height:20.64px;background:#f4f4f5;border:1px solid #c4c8ce;border-top:none"></div>
<span class="t" style="left:1704.00px;top:1109.88px;font:15px/18.00px 'Liberation Sans',sans-serif;color:#777;transform:scaleX(0.9112);transform-origin:0 50%;">1-Marker Calibration</span>
<div style="left:1836.96px;top:1107.36px;width:76.80px;height:22.56px;background:#fff;border:1px solid #a8acb4;border-top:none"></div>
<span class="t" style="left:1844.16px;top:1109.88px;font:15px/18.00px 'Liberation Sans',sans-serif;color:#111;transform:scaleX(0.8638);transform-origin:0 50%;">Trackables</span>
<div style="left:0.00px;top:952.08px;width:309.12px;height:21.60px;background:linear-gradient(90deg,#cbdaeb,#d6e2f0)"></div>
<span class="t" style="left:3.84px;top:954.12px;font:15px/18.00px 'Liberation Sans',sans-serif;color:#46505e;transform:scaleX(0.8668);transform-origin:0 50%;">Record and Playback</span>
<svg style="left:275.52px;top:956.64px;" width="10.56" height="12.48" viewBox="0 0 10.56 12.48"><path d="M3 1.4h4.8v5.4H3zM1.4 7h8M5.4 7v4.6" stroke="#2a3646" stroke-width="1.2" fill="none"/><path d="M6.6 1.6v5.2" stroke="#2a3646" stroke-width="1.6"/></svg>
<svg style="left:292.80px;top:957.36px;" width="11.52" height="11.04" viewBox="0 0 11.52 11.04"><path d="M1.6 1.4l8.2 8.2M9.8 1.4L1.6 9.6" stroke="#2a3646" stroke-width="1.7"/></svg>
<div style="left:22.80px;top:994.32px;width:266.88px;height:3.60px;background:#e2e4e8;border:1px solid #b8bcc4;border-radius:1px"></div>
<div style="left:14.16px;top:983.52px;width:12.96px;height:24.96px;background:linear-gradient(90deg,#fafafa,#dcdee2);border:1px solid #8a8e96;border-radius:2px"></div>
<div style="left:14.88px;top:1020.72px;width:39.36px;height:27.12px;background:linear-gradient(#f6f6f6,#ececec 48%,#dedede 52%,#d0d0d0);border:1px solid #8a8a8a;border-radius:2.5px"></div>
<svg style="left:14.88px;top:1020.72px" width="39.4" height="27.1" viewBox="2.5 1.8 35 24.4"><rect x="10" y="7" width="4" height="14" fill="#3c3c3c"/><path d="M30 7v14L15 14z" fill="#3c3c3c"/></svg>
<div style="left:62.88px;top:1020.72px;width:39.36px;height:27.12px;background:linear-gradient(#f6f6f6,#ececec 48%,#dedede 52%,#d0d0d0);border:1px solid #8a8a8a;border-radius:2.5px"></div>
<svg style="left:62.88px;top:1020.72px" width="39.4" height="27.1" viewBox="2.5 1.8 35 24.4"><path d="M27 7v14L13 14z" fill="#3c3c3c"/></svg>
<div style="left:111.12px;top:1020.72px;width:39.36px;height:27.12px;background:linear-gradient(#f6f6f6,#ececec 48%,#dedede 52%,#d0d0d0);border:1px solid #8a8a8a;border-radius:2.5px"></div>
<svg style="left:111.12px;top:1020.72px" width="39.4" height="27.1" viewBox="2.5 1.8 35 24.4"><rect x="13.5" y="7.5" width="13" height="13" fill="#3c3c3c"/></svg>
<div style="left:159.36px;top:1020.72px;width:39.36px;height:27.12px;background:linear-gradient(#f6f6f6,#ececec 48%,#dedede 52%,#d0d0d0);border:1px solid #8a8a8a;border-radius:2.5px"></div>
<svg style="left:159.36px;top:1020.72px" width="39.4" height="27.1" viewBox="2.5 1.8 35 24.4"><circle cx="20" cy="14" r="6" fill="#7a1428"/></svg>
<div style="left:207.36px;top:1020.72px;width:39.36px;height:27.12px;background:linear-gradient(#f6f6f6,#ececec 48%,#dedede 52%,#d0d0d0);border:1px solid #8a8a8a;border-radius:2.5px"></div>
<svg style="left:207.36px;top:1020.72px" width="39.4" height="27.1" viewBox="2.5 1.8 35 24.4"><path d="M14 7v14l14-7z" fill="#3c3c3c"/></svg>
<div style="left:255.36px;top:1020.72px;width:39.36px;height:27.12px;background:linear-gradient(#f6f6f6,#ececec 48%,#dedede 52%,#d0d0d0);border:1px solid #8a8a8a;border-radius:2.5px"></div>
<svg style="left:255.36px;top:1020.72px" width="39.4" height="27.1" viewBox="2.5 1.8 35 24.4"><rect x="26" y="7" width="4" height="14" fill="#3c3c3c"/><path d="M10 7v14l15-7z" fill="#3c3c3c"/></svg>
<div style="left:77.28px;top:1058.40px;width:37.44px;height:28.56px;background:linear-gradient(#f6f6f6,#ececec 48%,#dedede 52%,#d0d0d0);border:1px solid #8a8a8a;border-radius:2.5px"></div>
<svg style="left:77.28px;top:1058.40px" width="37.4" height="28.6" viewBox="2.5 1.8 35 24.4"><path d="M25 6v16L9 14z" fill="#3c3c3c"/><rect x="27" y="6" width="3.4" height="16" fill="#3c3c3c"/></svg>
<div style="left:186.24px;top:1058.40px;width:38.40px;height:28.56px;background:linear-gradient(#eef7fd,#dcf0fc 48%,#c6e8fb 52%,#b2def6);border:1px solid #3c8fc8;border-radius:2.5px;box-shadow:inset 0 0 0 1px #7fd6f7"></div>
<svg style="left:186.24px;top:1058.40px" width="38.4" height="28.6" viewBox="2.5 1.8 35 24.4"><path d="M15 6v16l16-8z" fill="#3c3c3c"/><rect x="9.6" y="6" width="3.4" height="16" fill="#3c3c3c"/></svg>
<div style="left:13.44px;top:1057.44px;width:54.96px;height:14.16px;background:#7e7e7e"></div>
<span class="t" style="left:22.92px;top:1057.74px;font:bold 11.5px/13.80px 'Liberation Sans',sans-serif;color:#e8e8e8;transform:scaleX(0.7611);transform-origin:0 50%;">LENGTH</span>
<div style="left:13.44px;top:1071.60px;width:54.96px;height:15.36px;background:#fff"></div>
<span class="t" style="left:25.80px;top:1071.12px;font:14px/16.80px 'Liberation Sans',sans-serif;color:#111;transform:scaleX(0.8833);transform-origin:0 50%;">0.00s</span>
<div style="left:123.60px;top:1057.44px;width:56.40px;height:14.16px;background:#7e7e7e"></div>
<span class="t" style="left:141.72px;top:1057.74px;font:bold 11.5px/13.80px 'Liberation Sans',sans-serif;color:#e8e8e8;transform:scaleX(0.8303);transform-origin:0 50%;">POS</span>
<div style="left:123.60px;top:1071.60px;width:56.40px;height:15.36px;background:#fff"></div>
<span class="t" style="left:136.68px;top:1071.12px;font:14px/16.80px 'Liberation Sans',sans-serif;color:#111;transform:scaleX(0.8833);transform-origin:0 50%;">0.00s</span>
<div style="left:232.80px;top:1057.44px;width:61.92px;height:14.16px;background:#7e7e7e"></div>
<span class="t" style="left:253.44px;top:1057.74px;font:bold 11.5px/13.80px 'Liberation Sans',sans-serif;color:#e8e8e8;transform:scaleX(0.8074);transform-origin:0 50%;">SIZE</span>
<div style="left:232.80px;top:1071.60px;width:61.92px;height:15.36px;background:#fff"></div>
<span class="t" style="left:245.04px;top:1071.12px;font:14px/16.80px 'Liberation Sans',sans-serif;color:#111;transform:scaleX(0.8443);transform-origin:0 50%;">0.0 MB</span>
<div style="left:126.72px;top:1090.08px;width:54.24px;height:14.88px;background:#fff"></div>
<span class="t" style="left:151.20px;top:1089.36px;font:14px/16.80px 'Liberation Sans',sans-serif;color:#111;transform:scaleX(0.8019);transform-origin:0 50%;">0</span>
<div style="left:314.40px;top:950.40px;width:1238.40px;height:21.12px;background:linear-gradient(90deg,#b4c6dc 0,#b9cae0 35%,#d3dfee 100%)"></div>
<span class="t" style="left:318.24px;top:952.20px;font:15px/18.00px 'Liberation Sans',sans-serif;color:#46505e;transform:scaleX(0.7901);transform-origin:0 50%;">Camera Preview</span>
<svg style="left:1519.20px;top:954.72px;" width="10.56" height="12.48" viewBox="0 0 10.56 12.48"><path d="M3 1.4h4.8v5.4H3zM1.4 7h8M5.4 7v4.6" stroke="#2a3646" stroke-width="1.2" fill="none"/><path d="M6.6 1.6v5.2" stroke="#2a3646" stroke-width="1.6"/></svg>
<svg style="left:1536.48px;top:955.44px;" width="11.52" height="11.04" viewBox="0 0 11.52 11.04"><path d="M1.6 1.4l8.2 8.2M9.8 1.4L1.6 9.6" stroke="#2a3646" stroke-width="1.7"/></svg>
<svg style="left:321.49px;top:978.13px" width="17.5" height="17.5" viewBox="0 0 16 16"><circle cx="8" cy="5" r="3.2" fill="#c8c8cc" stroke="#4a4a50" stroke-width="1.2"/><rect x="6.6" y="7" width="2.8" height="3" fill="#3a3a3e"/><path d="M0.8 11.2L8 8.6l7.2 2.6L8 14.6z" fill="#2e2e32"/></svg>
<svg style="left:346.93px;top:978.13px" width="17.5" height="17.5" viewBox="0 0 16 16"><path d="M1 1h4v4H1zM6 1h4v4H6zM11 1h4v4h-4zM1 6h4v4H1zM6 6h4v4H6zM11 6h4v4h-4zM1 11h4v4H1zM6 11h4v4H6zM11 11h4v4h-4z" fill="#1e1e22"/></svg>
<svg style="left:372.13px;top:978.13px" width="17.5" height="17.5" viewBox="0 0 16 16"><rect x="0.6" y="1.6" width="10" height="8" fill="#1e1e22"/><rect x="2" y="3" width="7.2" height="2" fill="#55555a"/><path d="M9.4 8.6l5 6" stroke="#1e1e22" stroke-width="2.8"/></svg>
<svg style="left:397.09px;top:978.13px" width="17.5" height="17.5" viewBox="0 0 16 16"><rect x="3.4" y="2.4" width="9.2" height="12.8" rx="1.6" fill="#c41616" stroke="#5a0c0c" stroke-width="1"/><rect x="5" y="0.6" width="6" height="3" fill="#3a1414"/><rect x="5.2" y="5" width="5.6" height="3.6" fill="#2c0c0c"/><rect x="5.6" y="10.6" width="4.8" height="2.6" fill="#f0b0b0"/></svg>
<svg style="left:423.25px;top:978.13px" width="17.5" height="17.5" viewBox="0 0 16 16"><path d="M0.6 12L10 4.4l5.4 7.6z" fill="#6e7276"/><path d="M4 9.6l5.4-4 3.4 4z" fill="#8e9296"/><path d="M2.6 12.6h13" stroke="#30a844" stroke-width="1.7"/></svg>
<div style="left:446.88px;top:976.80px;width:1.01px;height:20.64px;background:#b8bcc4"></div>
<svg style="left:453.70px;top:977.38px" width="19" height="19" viewBox="0 0 16 16"><path d="M0.5 2h6l1.2 2H15.5v11H0.5z" fill="#26262a"/><rect x="3" y="7.5" width="3.4" height="5" fill="#d0d0d0"/><rect x="8" y="6.5" width="4.6" height="2" fill="#9a9a9a"/><rect x="8" y="10" width="4.6" height="2.4" fill="#7a7a7a"/></svg>
<svg style="left:479.14px;top:977.38px" width="19" height="19" viewBox="0 0 16 16"><rect x="1.6" y="0.6" width="14" height="11.4" fill="#202024"/><rect x="6" y="3" width="5.4" height="2.4" fill="#c8c8c8"/><rect x="7.6" y="5" width="2.2" height="4.4" fill="#c8c8c8"/><path d="M2.8 11v4.8" stroke="#202024" stroke-width="2.4"/></svg>
<svg style="left:504.10px;top:977.38px" width="19" height="19" viewBox="0 0 16 16"><rect x="1.6" y="0.6" width="14" height="11.4" fill="#202024"/><rect x="6" y="3" width="5.4" height="2.4" fill="#c8c8c8"/><rect x="7.6" y="5" width="2.2" height="4.4" fill="#c8c8c8"/><path d="M2.8 11v4.8" stroke="#202024" stroke-width="2.4"/></svg>
<svg style="left:528.82px;top:977.38px" width="19" height="19" viewBox="0 0 16 16"><rect x="2.6" y="2.6" width="10.8" height="10.8" fill="#26262a"/><path d="M0.4 0.4l3.4 3.4M15.6 0.4l-3.4 3.4M0.4 15.6l3.4-3.4M15.6 15.6l-3.4-3.4" stroke="#26262a" stroke-width="2.2"/></svg>
<svg style="left:554.50px;top:977.38px" width="19" height="19" viewBox="0 0 16 16"><path d="M8 0.6v14.8M0.6 8h14.8" stroke="#7a7e86" stroke-width="1.5" stroke-dasharray="2.2 1.4"/><path d="M8 0l2.4 3H5.6zM8 16l2.4-3H5.6zM0 8l3-2.4v4.8zM16 8l-3-2.4v4.8z" fill="#6a6e76"/></svg>
<div style="left:578.88px;top:976.80px;width:1.01px;height:20.64px;background:#b8bcc4"></div>
<svg style="left:585.97px;top:978.13px" width="17.5" height="17.5" viewBox="0 0 16 16"><path d="M2 14l1.2-4L11.4 1.8l2.8 2.8L6 12.8z" fill="#b8bcc4" stroke="#3c3c42" stroke-width="1.2"/><path d="M2 14l1-3.4 2.4 2.4z" fill="#2a2a2e"/></svg>
<svg style="left:610.90px;top:977.38px" width="19" height="19" viewBox="0 0 16 16"><rect x="1.5" y="2" width="13" height="12" rx="1.5" fill="#d02020" stroke="#801010"/><path d="M9 6l4-3" stroke="#f0d040" stroke-width="2"/></svg>
<svg style="left:636.58px;top:977.38px" width="19" height="19" viewBox="0 0 16 16"><circle cx="8" cy="8.5" r="6.5" fill="#d02818" stroke="#801010"/><path d="M9 6l4-4" stroke="#f0d040" stroke-width="2"/></svg>
<svg style="left:662.02px;top:977.38px" width="19" height="19" viewBox="0 0 16 16"><path d="M8 0.6l6.8 2.2v5.4q0 5.4-6.8 7.4Q1.2 13.6 1.2 8.2V2.8z" fill="#c8cace" stroke="#85888e" stroke-width="1.2"/><path d="M8 2.4v11.8" stroke="#eceef0" stroke-width="1.4"/></svg>
<svg style="left:687.46px;top:977.38px" width="19" height="19" viewBox="0 0 16 16"><path d="M8 0.6l6.8 2.2v5.4q0 5.4-6.8 7.4Q1.2 13.6 1.2 8.2V2.8z" fill="#c8cace" stroke="#85888e" stroke-width="1.2"/><rect x="9" y="11" width="6.6" height="2.6" fill="#d82020"/></svg>
<div style="left:313.44px;top:1028.16px;width:102.72px;height:77.76px;background:#000;border:1px solid #6eaadc"></div>
<span class="t" style="left:315.84px;top:1028.10px;font:6.5px/7.80px 'Liberation Sans',sans-serif;color:#909090;transform:scaleX(0.8917);transform-origin:0 50%;-webkit-text-stroke:0;">Camera 1</span>
<span class="t" style="left:362.40px;top:1028.10px;font:6.5px/7.80px 'Liberation Sans',sans-serif;color:#909090;transform:scaleX(0.6924);transform-origin:0 50%;-webkit-text-stroke:0;">OptiTrack V100:R2 #1517</span>
<span class="t" style="right:1507.20px;top:1083.24px;font:17px/20.40px 'Liberation Sans',sans-serif;color:#353535;">1</span>
<div style="left:316.80px;top:1101.60px;width:7.20px;height:1.20px;background:#888"></div>
<div style="left:416.64px;top:1028.16px;width:102.72px;height:77.76px;background:#000;border:1px solid #62666c"></div>
<span class="t" style="left:419.04px;top:1028.10px;font:6.5px/7.80px 'Liberation Sans',sans-serif;color:#909090;transform:scaleX(0.8917);transform-origin:0 50%;-webkit-text-stroke:0;">Camera 2</span>
<span class="t" style="left:465.60px;top:1028.10px;font:6.5px/7.80px 'Liberation Sans',sans-serif;color:#909090;transform:scaleX(0.6924);transform-origin:0 50%;-webkit-text-stroke:0;">OptiTrack V100:R2 #1517</span>
<span class="t" style="right:1404.00px;top:1083.24px;font:17px/20.40px 'Liberation Sans',sans-serif;color:#353535;">2</span>
<div style="left:420.00px;top:1101.60px;width:7.20px;height:1.20px;background:#888"></div>
<div style="left:519.84px;top:1028.16px;width:102.72px;height:77.76px;background:#000;border:1px solid #6eaadc"></div>
<span class="t" style="left:522.24px;top:1028.10px;font:6.5px/7.80px 'Liberation Sans',sans-serif;color:#909090;transform:scaleX(0.8917);transform-origin:0 50%;-webkit-text-stroke:0;">Camera 3</span>
<span class="t" style="left:568.80px;top:1028.10px;font:6.5px/7.80px 'Liberation Sans',sans-serif;color:#909090;transform:scaleX(0.6924);transform-origin:0 50%;-webkit-text-stroke:0;">OptiTrack V100:R2 #1517</span>
<span class="t" style="right:1300.80px;top:1083.24px;font:17px/20.40px 'Liberation Sans',sans-serif;color:#353535;">3</span>
<div style="left:523.20px;top:1101.60px;width:7.20px;height:1.20px;background:#888"></div>
<div style="left:623.04px;top:1028.16px;width:102.72px;height:77.76px;background:#000;border:1px solid #6eaadc"></div>
<span class="t" style="left:625.44px;top:1028.10px;font:6.5px/7.80px 'Liberation Sans',sans-serif;color:#909090;transform:scaleX(0.8917);transform-origin:0 50%;-webkit-text-stroke:0;">Camera 4</span>
<span class="t" style="left:672.00px;top:1028.10px;font:6.5px/7.80px 'Liberation Sans',sans-serif;color:#909090;transform:scaleX(0.6924);transform-origin:0 50%;-webkit-text-stroke:0;">OptiTrack V100:R2 #1517</span>
<span class="t" style="right:1197.60px;top:1083.24px;font:17px/20.40px 'Liberation Sans',sans-serif;color:#353535;">4</span>
<div style="left:626.40px;top:1101.60px;width:7.20px;height:1.20px;background:#888"></div>
<div style="left:726.24px;top:1028.16px;width:102.72px;height:77.76px;background:#000;border:1px solid #6eaadc"></div>
<span class="t" style="left:728.64px;top:1028.10px;font:6.5px/7.80px 'Liberation Sans',sans-serif;color:#909090;transform:scaleX(0.8917);transform-origin:0 50%;-webkit-text-stroke:0;">Camera 5</span>
<span class="t" style="left:775.20px;top:1028.10px;font:6.5px/7.80px 'Liberation Sans',sans-serif;color:#909090;transform:scaleX(0.6924);transform-origin:0 50%;-webkit-text-stroke:0;">OptiTrack V100:R2 #1517</span>
<span class="t" style="right:1094.40px;top:1083.24px;font:17px/20.40px 'Liberation Sans',sans-serif;color:#353535;">5</span>
<div style="left:729.60px;top:1101.60px;width:7.20px;height:1.20px;background:#888"></div>
<div style="left:829.44px;top:1028.16px;width:102.72px;height:77.76px;background:#000;border:1px solid #6eaadc"></div>
<span class="t" style="left:831.84px;top:1028.10px;font:6.5px/7.80px 'Liberation Sans',sans-serif;color:#909090;transform:scaleX(0.8917);transform-origin:0 50%;-webkit-text-stroke:0;">Camera 6</span>
<span class="t" style="left:878.40px;top:1028.10px;font:6.5px/7.80px 'Liberation Sans',sans-serif;color:#909090;transform:scaleX(0.6924);transform-origin:0 50%;-webkit-text-stroke:0;">OptiTrack V100:R2 #1517</span>
<span class="t" style="right:991.20px;top:1083.24px;font:17px/20.40px 'Liberation Sans',sans-serif;color:#353535;">6</span>
<div style="left:832.80px;top:1101.60px;width:7.20px;height:1.20px;background:#888"></div>
<div style="left:932.64px;top:1028.16px;width:102.72px;height:77.76px;background:#000;border:1px solid #62666c"></div>
<span class="t" style="left:935.04px;top:1028.10px;font:6.5px/7.80px 'Liberation Sans',sans-serif;color:#909090;transform:scaleX(0.8917);transform-origin:0 50%;-webkit-text-stroke:0;">Camera 7</span>
<span class="t" style="left:981.60px;top:1028.10px;font:6.5px/7.80px 'Liberation Sans',sans-serif;color:#909090;transform:scaleX(0.6924);transform-origin:0 50%;-webkit-text-stroke:0;">OptiTrack V100:R2 #1517</span>
<span class="t" style="right:888.00px;top:1083.24px;font:17px/20.40px 'Liberation Sans',sans-serif;color:#353535;">7</span>
<div style="left:936.00px;top:1101.60px;width:7.20px;height:1.20px;background:#888"></div>
<div style="left:1035.84px;top:1028.16px;width:102.72px;height:77.76px;background:#000;border:1px solid #62666c"></div>
<span class="t" style="left:1038.24px;top:1028.10px;font:6.5px/7.80px 'Liberation Sans',sans-serif;color:#909090;transform:scaleX(0.8917);transform-origin:0 50%;-webkit-text-stroke:0;">Camera 8</span>
<span class="t" style="left:1084.80px;top:1028.10px;font:6.5px/7.80px 'Liberation Sans',sans-serif;color:#909090;transform:scaleX(0.6924);transform-origin:0 50%;-webkit-text-stroke:0;">OptiTrack V100:R2 #1517</span>
<span class="t" style="right:784.80px;top:1083.24px;font:17px/20.40px 'Liberation Sans',sans-serif;color:#353535;">8</span>
<div style="left:1039.20px;top:1101.60px;width:7.20px;height:1.20px;background:#888"></div>
<div style="left:1139.04px;top:1028.16px;width:102.72px;height:77.76px;background:#000;border:1px solid #6eaadc"></div>
<span class="t" style="left:1141.44px;top:1028.10px;font:6.5px/7.80px 'Liberation Sans',sans-serif;color:#909090;transform:scaleX(0.8917);transform-origin:0 50%;-webkit-text-stroke:0;">Camera 9</span>
<span class="t" style="left:1188.00px;top:1028.10px;font:6.5px/7.80px 'Liberation Sans',sans-serif;color:#909090;transform:scaleX(0.6924);transform-origin:0 50%;-webkit-text-stroke:0;">OptiTrack V100:R2 #1517</span>
<span class="t" style="right:681.60px;top:1083.24px;font:17px/20.40px 'Liberation Sans',sans-serif;color:#353535;">9</span>
<div style="left:1142.40px;top:1101.60px;width:7.20px;height:1.20px;background:#888"></div>
<div style="left:1242.24px;top:1028.16px;width:102.72px;height:77.76px;background:#000;border:1px solid #62666c"></div>
<span class="t" style="left:1244.64px;top:1028.10px;font:6.5px/7.80px 'Liberation Sans',sans-serif;color:#909090;transform:scaleX(0.7915);transform-origin:0 50%;-webkit-text-stroke:0;">Camera 10</span>
<span class="t" style="left:1291.20px;top:1028.10px;font:6.5px/7.80px 'Liberation Sans',sans-serif;color:#909090;transform:scaleX(0.6924);transform-origin:0 50%;-webkit-text-stroke:0;">OptiTrack V100:R2 #1517</span>
<span class="t" style="right:578.40px;top:1083.24px;font:17px/20.40px 'Liberation Sans',sans-serif;color:#353535;">10</span>
<div style="left:1245.60px;top:1101.60px;width:7.20px;height:1.20px;background:#888"></div>
<div style="left:1345.44px;top:1028.16px;width:102.72px;height:77.76px;background:#000;border:1px solid #62666c"></div>
<span class="t" style="left:1347.84px;top:1028.10px;font:6.5px/7.80px 'Liberation Sans',sans-serif;color:#909090;transform:scaleX(0.8036);transform-origin:0 50%;-webkit-text-stroke:0;">Camera 11</span>
<span class="t" style="left:1394.40px;top:1028.10px;font:6.5px/7.80px 'Liberation Sans',sans-serif;color:#909090;transform:scaleX(0.6924);transform-origin:0 50%;-webkit-text-stroke:0;">OptiTrack V100:R2 #1517</span>
<span class="t" style="right:475.20px;top:1083.24px;font:17px/20.40px 'Liberation Sans',sans-serif;color:#353535;">11</span>
<div style="left:1348.80px;top:1101.60px;width:7.20px;height:1.20px;background:#888"></div>
<div style="left:1448.64px;top:1028.16px;width:102.72px;height:77.76px;background:#000;border:1px solid #6eaadc"></div>
<span class="t" style="left:1451.04px;top:1028.10px;font:6.5px/7.80px 'Liberation Sans',sans-serif;color:#909090;transform:scaleX(0.7915);transform-origin:0 50%;-webkit-text-stroke:0;">Camera 12</span>
<span class="t" style="left:1497.60px;top:1028.10px;font:6.5px/7.80px 'Liberation Sans',sans-serif;color:#909090;transform:scaleX(0.6924);transform-origin:0 50%;-webkit-text-stroke:0;">OptiTrack V100:R2 #1517</span>
<span class="t" style="right:372.00px;top:1083.24px;font:17px/20.40px 'Liberation Sans',sans-serif;color:#353535;">12</span>
<div style="left:1452.00px;top:1101.60px;width:7.20px;height:1.20px;background:#888"></div>
<div style="left:484.56px;top:1044.00px;width:7.68px;height:3.60px;background:#c01414;border-radius:50%;transform:rotate(22deg)"></div>
<div style="left:495.84px;top:1049.52px;width:2.88px;height:2.88px;background:#a81212;border-radius:50%"></div>
<div style="left:499.20px;top:1037.28px;width:2.40px;height:2.40px;background:#981010;border-radius:50%"></div>
<div style="left:1025.28px;top:1055.04px;width:2.16px;height:2.16px;background:#a01414;border-radius:50%"></div>
<div style="left:1100.16px;top:1063.68px;width:2.16px;height:2.16px;background:#a01414;border-radius:50%"></div>
<div style="left:1126.08px;top:1054.56px;width:2.16px;height:2.16px;background:#a01414;border-radius:50%"></div>
<div style="left:1298.40px;top:1039.20px;width:2.16px;height:2.16px;background:#a01414;border-radius:50%"></div>
<div style="left:1350.24px;top:1047.84px;width:2.16px;height:2.16px;background:#a01414;border-radius:50%"></div>
<div style="left:1348.80px;top:1076.16px;width:2.16px;height:2.16px;background:#a01414;border-radius:50%"></div>
<div style="left:0.00px;top:1130.40px;width:1920.00px;height:21.60px;background:#f0f0f0"></div>
<span class="t" style="left:4.32px;top:1136.04px;font:bold 15px/18.00px 'Liberation Sans',sans-serif;color:#000;transform:scaleX(0.8434);transform-origin:0 50%;">Status: Live Video</span>
<div style="left:310.56px;top:1134.00px;width:1.01px;height:18.00px;background:#8a8a8a"></div>
<span class="t" style="left:316.80px;top:1136.04px;font:bold 15px/18.00px 'Liberation Sans',sans-serif;color:#7c7c7c;transform:scaleX(0.8952);transform-origin:0 50%;">Incoming Data Rate: 132.8KB/s</span>
<div style="left:919.68px;top:1134.00px;width:1.01px;height:18.00px;background:#8a8a8a"></div>
<span class="t" style="left:925.44px;top:1136.04px;font:bold 15px/18.00px 'Liberation Sans',sans-serif;color:#7c7c7c;transform:scaleX(0.8669);transform-origin:0 50%;">Point Cloud: 0.1ms (Residual 2.5 mm/ray)</span>
<div style="left:1219.68px;top:1134.00px;width:1.01px;height:18.00px;background:#8a8a8a"></div>
<span class="t" style="left:1226.40px;top:1136.04px;font:bold 15px/18.00px 'Liberation Sans',sans-serif;color:#7c7c7c;transform:scaleX(0.8400);transform-origin:0 50%;">Latency: 3.0 ms</span>
<div style="left:1347.36px;top:1134.00px;width:1.01px;height:18.00px;background:#8a8a8a"></div>
<span class="t" style="left:1353.60px;top:1136.04px;font:bold 15px/18.00px 'Liberation Sans',sans-serif;color:#7c7c7c;transform:scaleX(0.8611);transform-origin:0 50%;">Display: 61 Frames/Second</span>
<div style="left:1557.60px;top:1134.00px;width:1.01px;height:18.00px;background:#8a8a8a"></div>
<span class="t" style="left:1562.40px;top:1136.04px;font:bold 15px/18.00px 'Liberation Sans',sans-serif;color:#7c7c7c;transform:scaleX(0.8657);transform-origin:0 50%;">Cameras: 100 Frames/Second</span>
<span class="t" style="left:1782.24px;top:1136.04px;font:15px/18.00px 'Liberation Sans',sans-serif;color:#8a8a8a;transform:scaleX(0.8097);transform-origin:0 50%;">CAP</span>
<span class="t" style="left:1820.16px;top:1136.04px;font:15px/18.00px 'Liberation Sans',sans-serif;color:#111;transform:scaleX(0.8713);transform-origin:0 50%;">NUM</span>
<span class="t" style="left:1862.88px;top:1136.04px;font:15px/18.00px 'Liberation Sans',sans-serif;color:#8a8a8a;transform:scaleX(0.7560);transform-origin:0 50%;">SCRL</span>
</div></body></html>
